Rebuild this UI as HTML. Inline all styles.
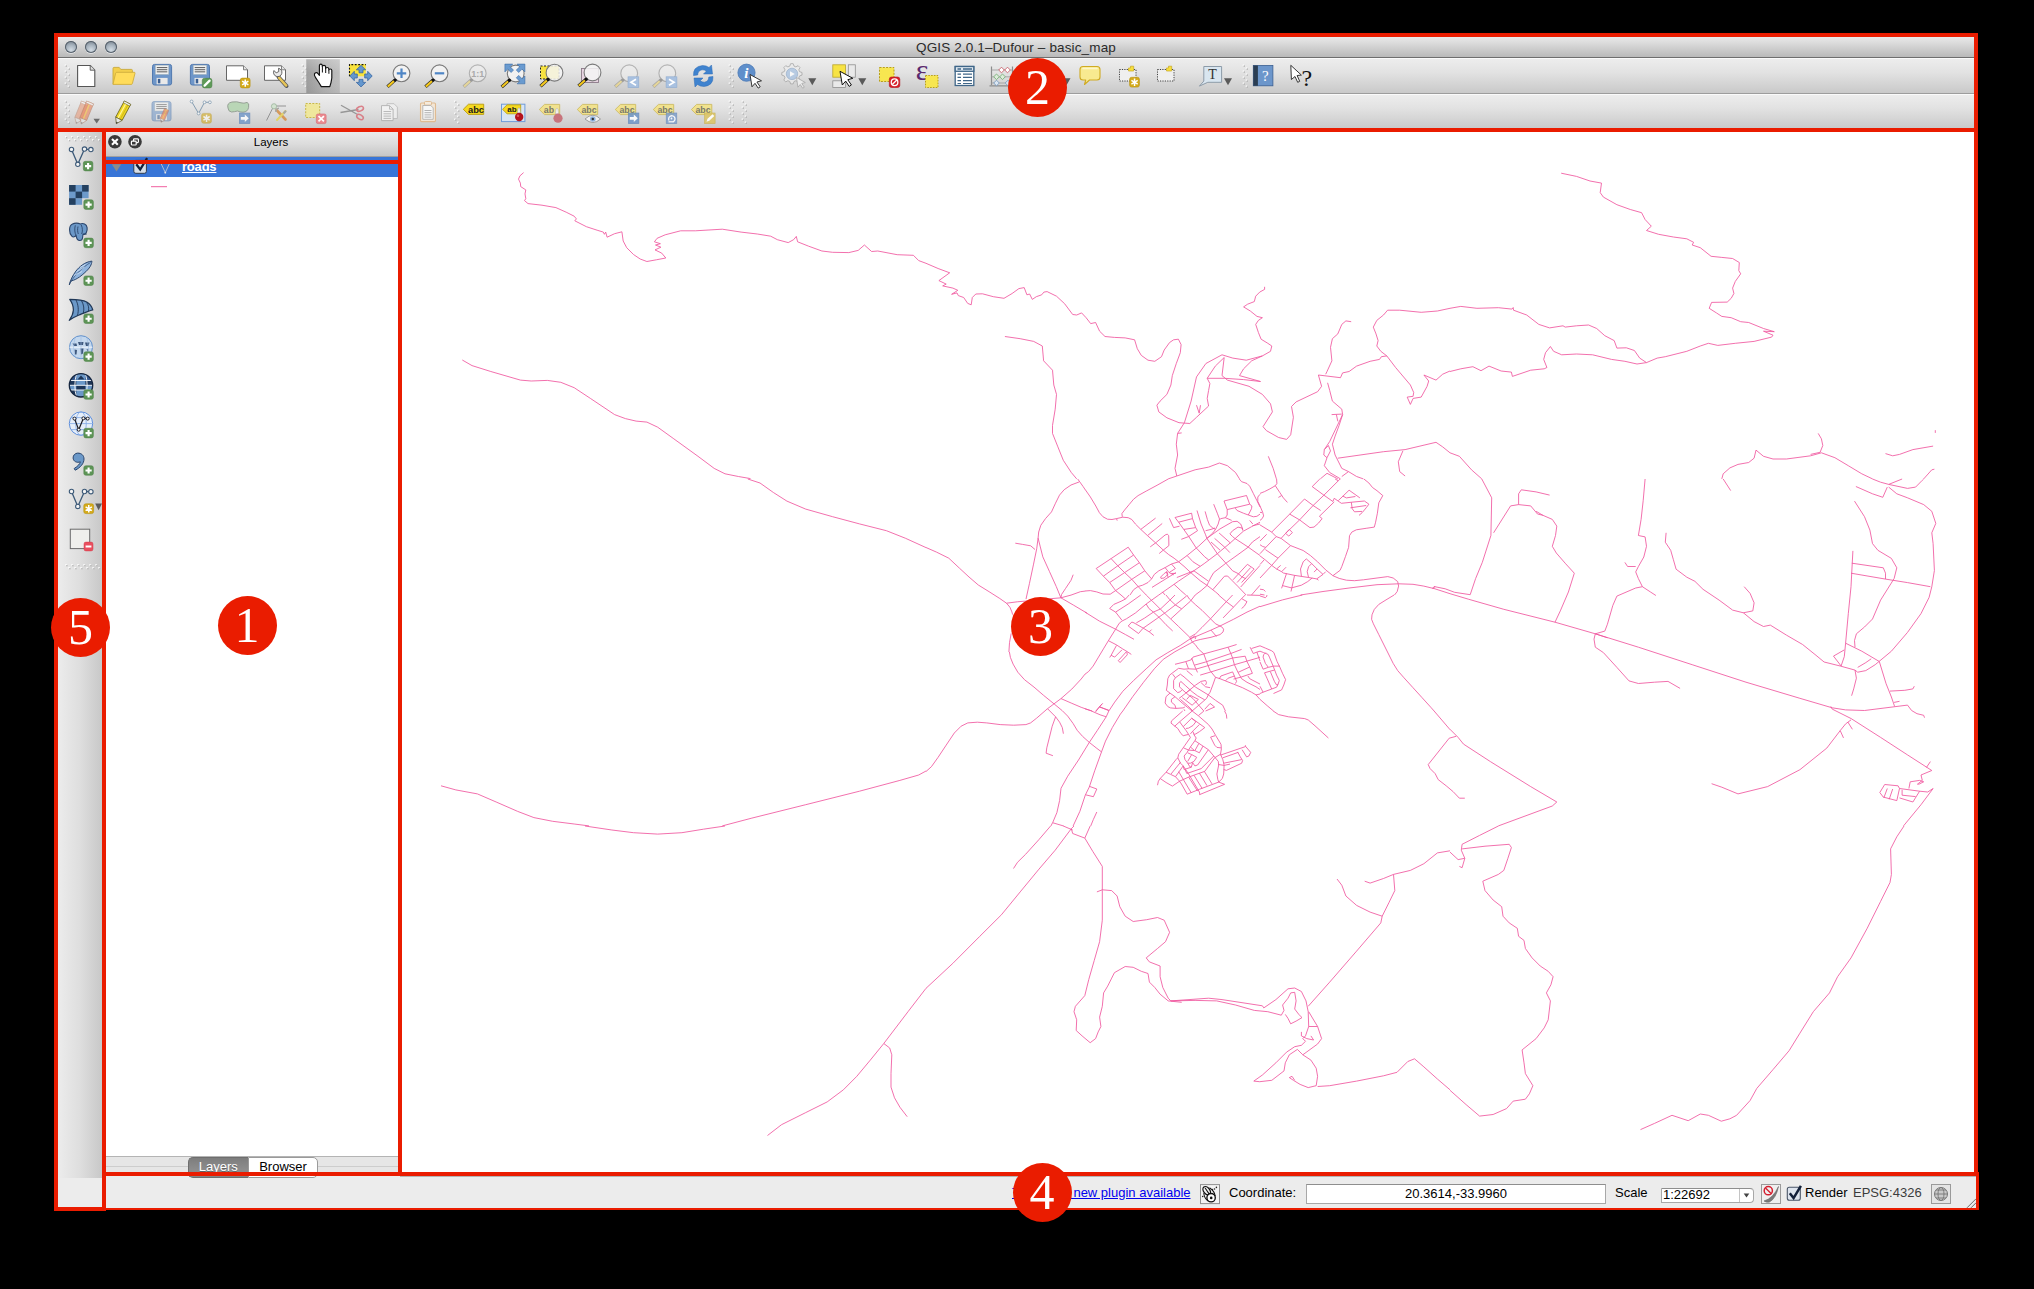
<!DOCTYPE html>
<html>
<head>
<meta charset="utf-8">
<title>QGIS 2.0.1-Dufour - basic_map</title>
<style>
html,body{margin:0;padding:0;background:#000;}
body{width:2034px;height:1289px;position:relative;overflow:hidden;font-family:"Liberation Sans",sans-serif;color:#000;}
.abs{position:absolute;}
#win{position:absolute;left:58px;top:37px;width:1916px;height:1171px;background:#ececec;}
#title{position:absolute;left:58px;top:37px;width:1916px;height:21px;background:linear-gradient(#e9e9e9 0%,#d4d4d4 45%,#b9b9b9 100%);border-bottom:1px solid #6e6e6e;box-sizing:border-box;}
#title .t{position:absolute;left:0;right:0;top:3px;text-align:center;font-size:13.5px;color:#2a2a2a;letter-spacing:0.14px;}
.tl{position:absolute;top:4px;width:12px;height:12px;border-radius:50%;background:radial-gradient(circle at 50% 75%,#d3dce4 0%,#a9b5c0 45%,#7d8995 80%);box-shadow:0 0 0 1px #56606b inset,0 1px 0 rgba(255,255,255,.5);}
#tb1{position:absolute;left:58px;top:58px;width:1916px;height:36px;background:linear-gradient(#ededed 0%,#e2e2e2 40%,#c9c9c9 100%);border-top:1px solid #fafafa;border-bottom:1px solid #9d9d9d;box-sizing:border-box;}
#tb2{position:absolute;left:58px;top:94px;width:1916px;height:34px;background:linear-gradient(#ededed 0%,#e2e2e2 40%,#cacaca 100%);border-top:1px solid #fafafa;box-sizing:border-box;}
#ltb{position:absolute;left:58px;top:132px;width:44px;height:1046px;background:linear-gradient(90deg,#ececec 0%,#dedede 50%,#c8c8c8 100%);}
#lhdr{position:absolute;left:106px;top:132px;width:292px;height:25px;background:linear-gradient(#ebebeb 0%,#dcdcdc 50%,#c6c6c6 100%);border-bottom:1px solid #a0a0a0;box-sizing:border-box;}
#lhdr .t{position:absolute;left:0;right:0;top:4px;text-align:center;font-size:11.5px;padding-left:38px;}
#llist{position:absolute;left:106px;top:157px;width:292px;height:999px;background:#fff;}
#lrow{position:absolute;left:106px;top:157px;width:292px;height:20px;background:#3875d7;}
#ltabs{position:absolute;left:106px;top:1156px;width:292px;height:21px;background:#e6e6e6;border-top:1px solid #b4b4b4;box-sizing:border-box;}
#map{position:absolute;left:402px;top:132px;width:1572px;height:1040px;background:#fff;overflow:hidden;}
#status{position:absolute;left:106px;top:1176px;width:1870px;height:32px;background:#ececec;}
.st{font-size:13px;line-height:15px;white-space:nowrap;}
.r{position:absolute;background:#ea1c00;}
.circ{position:absolute;width:59px;height:59px;border-radius:50%;background:#ea1c00;color:#fff;font-family:"Liberation Serif",serif;font-size:50px;text-align:center;line-height:59px;}
</style>
</head>
<body>
<div id="win"></div>
<div id="title">
  <div class="tl" style="left:7px"></div><div class="tl" style="left:27px"></div><div class="tl" style="left:47px"></div>
  <div class="t">QGIS 2.0.1&#8211;Dufour &#8211; basic_map</div>
</div>
<div id="tb1"></div>
<div id="tb2"></div>
<div id="ltb"></div>
<div id="lhdr"><div class="t">Layers</div></div>
<div id="llist"></div>
<div id="lrow"></div>
<div class="abs" style="left:182px;top:159px;font-size:13px;font-weight:bold;color:#fff;text-decoration:underline;letter-spacing:-0.2px;line-height:15px;">roads</div>
<div id="ltabs"></div>
<div class="abs" style="left:106px;top:1166px;width:292px;height:1px;background:#cdcdcd"></div>


<div id="map">
<!--MAPSVG--><svg class="abs" style="left:0;top:0" width="1572" height="1040" viewBox="402 132 1572 1040"><path d="M523.6 172.6L519.9 175.9L518.5 179.1L520.4 183.1L520.7 186.6L525.8 189.9L525 193.9L525.8 198.7L524.5 200.6L528 203.6L542 205.2L555.9 207.6L566.2 212.2L574.2 216.2L576.4 218.9L574.8 220.8L586.4 226.7L597.1 230.2L603.3 232.1L604.4 234.3L605.7 232.1L607.1 237.2L614.6 233.7L621.9 231.8L623.2 241L626.7 247.7L633.5 254.5L640.2 259L646.9 261.5L656.3 259.8L665.8 258L661.7 253.1L655 249.9L660.9 247.2L655.5 245L660.4 243.7L654.4 241.8L657.1 238.3L665.2 234.8L680.6 230.8L695.4 230.8L722.3 229.2L741.1 232.1L757.3 234L770.7 236.2L777.4 239.7L788.2 242.6L793.6 239.7L796.3 236.4L797.6 241.8L808.4 246.1L821.9 251L832.6 252.3L848.8 252.6L858.2 250.4L864.4 245L871.6 251.5L877.8 251L897.2 254.7L913.4 255.3L918.7 260.6L926 263.3M462.3 360L472 365.6L490.8 371.5L520.4 380.1L531.2 381L547.3 380.4L560.8 382.3L574.2 387.7L590.4 398.4L614.6 414.6L625.4 418.6L636.1 421.1L646.9 422.1L657.7 427.2L673.8 438.8L698 456.3L714.2 468.4L725 473.8L738.4 476.5L750.5 478.6M747.8 479L760 483L773.4 492.5L786.9 501.1L805.7 509.1L832.6 516.7L859.5 523.9L886.4 530.7L905.3 538.2L926 547.6M441 785.8L455.8 789.9L477.4 793.9L496.2 802L517.7 811.4L533.9 817.6L552.7 821.3L574.2 824L589 825.9M722.3 825.9L751.9 818.1L805.7 804.7L859.5 791.2L899.9 780.4L918.7 775L926 771M585 826L611.9 830L633.5 832.7L657.7 834.1L681.9 832.7L703.4 829.2L725 826M926 988.3L908 1011.7L883.8 1043.5L870.3 1060.1L856.8 1076.3L843.4 1089.8L827.2 1101.9L805.7 1112.6L781.5 1124.7L767.5 1135.5M883.8 1043.5L889.7 1048L891.8 1054.8L891 1073.6L891 1087.1L894.5 1097.8L899.9 1107.2L907.2 1116.7M926 263.3L938.1 268.5L949.7 272.8L938.9 280.6L946.2 284.1L942.7 285.9L952.9 288.1L957.8 290.3L951.6 294.3L957 292.9L958.3 295.6L963.7 297.5L967.7 303.4L971.2 304.8L972.3 297.5L975.8 294L982.5 293.8L993.3 296.7L1004 298.3L1012.1 293.5L1018.9 288.6L1024.2 287.6L1026.9 294.8L1029.6 294L1032.3 299.4L1036.3 296.7L1041.7 294.8L1043.9 292.1L1047.1 291.6L1056.5 296.2L1064.6 303.7L1072.7 314.5L1076.7 315L1081.6 312.9L1086.1 317.7L1090.7 323.6L1095.6 322.5L1099.6 331.2L1105 336.5L1114.4 337.4L1125.2 337.9L1134.6 339.8L1137.3 348.7L1141.3 355.4L1148 360.2L1154.8 361.3L1161.5 356.7L1164.2 350L1169.6 342.5L1173.6 339.8L1178.4 339.2L1181.1 344.6L1180.3 352.7L1176.3 363.5L1172.3 375.6L1170.9 385L1166.9 394.4L1160.1 401.1L1156.9 405.2L1158.8 411.9L1166.9 417.8L1179 422.7L1189.8 423.5L1196.5 417.3L1208.6 406L1207.2 398.4L1208.6 390.4L1209.9 383.6L1207.2 378.3M1177.6 433.4L1184.4 422.7L1191.1 401.1L1196.5 376.9L1205.9 363.5L1222 354.8L1232.8 358.1L1246.3 360.2L1262.4 355.9L1270.5 351.3L1271.8 346L1267.8 343.3L1261.1 339.2L1258.4 332.5L1255.7 324.4L1258.4 320.4L1262.4 317.7L1257 316.4L1250.3 311L1243.6 306.9L1247.6 304.2L1254.3 301.6L1255.7 296.2L1259.7 292.1L1264.6 289.4L1264.6 286.8M1207.2 378.3L1215.3 366.1L1224.2 357.5L1222 375.6L1227.4 380.1L1249 386.3L1262.4 394.4L1270.5 403.8L1272.4 411.9L1263 426.7L1266.5 430.7L1278.6 437.5L1286.6 439.4L1290.7 434.8L1293.4 417.3L1291.5 406.5L1296.1 401.9L1317.6 391.7L1321.6 386.3L1318.4 375L1340.5 377.7L1342.6 372.9L1349.1 371.5L1356.6 366.1L1370.1 361.3L1379.5 359.4L1381.4 356.7L1386.8 355.9L1395.6 367.5L1410.4 385L1413.7 392.5L1413.1 396.3L1407.2 397.1L1410.4 404.4L1413.1 398.4L1421.2 397.1L1427.1 386.3L1428.7 381L1423.9 375L1436 380.1L1442.7 374.2L1450 371M1207.2 378.3L1224.7 378.3L1243.6 379.6L1260.5 381.5L1239.5 375.6L1243.6 368.8L1251.7 360.8L1262.4 355.9M1199.2 413.2L1196.5 405.2M1199.2 413.2L1200.5 405.2M1004.9 336.5L1020.2 338.7L1033.7 341.4L1042.3 346L1043.6 360.8L1052.5 370.2L1053.8 385L1056.5 394.4L1055.2 409.2L1052.5 425.4L1052.5 433.4L1057.9 446.9L1063.3 460.3L1071.3 472.5L1076.7 478.9M1351.2 321.7L1345.9 320.9L1341.8 324.4L1337.8 333.9L1332.4 338.7L1330.5 347.3L1331.9 360.8L1327 371.5L1325.7 374.2M1450 308.3L1437.4 311L1421.2 312.3L1399.7 310.2L1387.6 310.2L1383.5 315L1376.8 320.4L1373.3 327.1L1376 333.9L1378.1 340.6L1376.8 346L1380.8 351.3L1386.8 355.9M1327.6 382.8L1329.7 390.4L1332.4 401.1L1341.8 409.2L1342.6 414.6L1339.1 425.4L1335.1 436.1L1332.4 444.2L1335.1 455L1341.8 468.4L1348.5 471.6M1331.6 414.6L1341.8 414.1M1336.4 414.6L1337.8 421.3M1342.6 414.6L1329.7 441.5L1324.3 449.6L1323.8 455L1327 457.7L1324.3 465.7L1329.7 472.5L1340.5 478.9M1324.3 449.6L1328.4 445.5L1330.5 450.9L1327 457.7M1337.8 458.2L1383.5 451.7L1405.1 449.6L1436 442.3L1442.7 446.9L1450 452.8M1402.9 450.9L1398.3 461.7L1399.7 471.6L1405.1 476M1181.7 432.9L1177.6 433.4L1176.3 444.2L1177.6 455L1175 468.4L1176.8 476L1168.2 478.9M1176.8 476L1195.1 469.8L1208.6 467.1L1219.4 463L1227.4 465.7L1235.5 472.5L1239.5 478.9M1268.3 456.3L1273.2 468.4L1276.4 478.9M1320.3 478.9L1327 473.3L1337.8 478.9M1341.8 476.5L1348.5 471.6L1356.6 476.5L1363.3 478.9M1182.7 711L1171.5 720.9L1171 723.1L1177.8 728.5L1180.9 733.5L1183.2 735.7L1188.6 734.4M1192.2 711L1179.6 721.8L1174.6 726.3M1179.6 721.8L1183.2 726.7L1185.9 730.3L1188.6 734.4L1190.4 737.5L1185 745.2L1178.7 754.2L1177.8 757.8L1180.5 763.2L1183.2 765.9L1188.6 774L1194 783L1199.4 792L1199.8 794.7M1203.9 711L1198.5 715.5M1192.2 711L1198.5 715.9L1208.4 724.5L1212 729L1215.6 735.3L1221 744.3L1221.4 748.8L1220.5 754.2L1222.8 759.6L1224.1 765L1223.7 774L1222.3 778.5L1218.7 782.1L1224.6 784.3L1199.4 794.7M1183.2 726.7L1191.7 718.2L1195.8 721.8L1193.1 725.4L1188.6 728.1L1185.9 728.5M1191.7 718.2L1204.8 727.6L1199.4 731.7L1195.8 733.9L1194 734.4M1199.4 724.5L1193.1 730.8L1190.4 733.9M1193.1 731.7L1194 734.8L1196.2 738L1194.9 740.7L1190.4 747L1186.8 752.8L1184.1 756L1185 759.6L1187.7 763.2L1189.9 766.8L1191.3 767.2M1194.9 740.7L1203 746.1L1208.4 749.7L1213.8 756L1218.3 761.4L1218.7 765L1216.9 774L1217.8 779.4L1218.7 782.1M1183.6 747.9L1188.6 750.1L1194.9 750.6L1199.4 752.8L1203 746.1M1190.4 747L1194 750.1M1198.9 743.4L1194.9 750.6M1187.7 752.8L1191.7 754.6L1196.7 757.3L1194 761.4L1190.4 763.2L1187.7 763.2M1191.7 754.6L1187.7 761.4M1208.4 749.7L1197.6 765L1194.9 765.9L1192.6 762.7L1191.3 767.2L1184.1 769.5L1183.2 765.9M1213.8 756L1201.2 768.6L1186.8 773.5L1185 769.5M1220.5 754.2L1214.7 757.8L1204.8 771.3L1188.6 777.1L1179.6 781.2L1172.4 786.1L1166.1 782.5L1160.2 778.5L1158.4 781.2L1157.5 785.2M1160.2 778.5L1166.1 772.2L1176 759.6L1177.8 757.8M1166.1 772.2L1170.6 774.4L1175.5 776.7L1178.7 780.3L1181.4 783.9L1187.2 794.2L1199.4 789.3L1218.7 782.1M1171 774L1180.5 762.3M1175.5 776.7L1183.2 765.9M1178.7 771.7L1191.3 792.9M1194 775.3L1202.1 788.4M1199.4 773.1L1207 785.7M1204.3 771.3L1212 783.9M1188.6 777.1L1197.6 791.1M1210.6 737.1L1215.1 735.7M1210.6 737.1L1214.7 745.2L1216.9 747.4L1221 747.9M1220.5 755.1L1245.7 746.5L1250.7 752.4L1248.9 756L1246.6 756.9L1242.1 749.7M1245.7 746.5L1245.3 745.2M1237.6 751.9L1240.3 756.9L1242.6 760.5L1241.7 763.2L1226.4 770.4L1223.7 769.5M1222.8 757.8L1238.1 752.4M1223.7 763.2L1241.7 759.6M1218.3 764.5L1224.1 765.4L1230 764.1M1224.6 711L1226.4 714.6L1226.8 718.6M1273.2 711L1278.6 714.6L1288.5 716.8L1304.7 718.6L1308.3 720L1315 725.8L1328.4 738M1085 489.3L1090.4 497L1095.8 506L1099.4 512.7L1103 516.8L1107.5 519.2L1112 519.5L1116.5 518.6L1122.8 517.2L1128.2 517.7L1131.8 519.5L1135.4 524L1140.8 529.4L1148 536.1L1155.6 542.9L1163.3 550.1L1168.7 554.6L1174.1 558.2L1178.6 561.8L1184 566.3L1191.2 573L1200.2 580.7L1207.4 585.6L1215.5 591.9L1219.1 595M1116.5 518.6L1117.2 520.6M1168.2 479L1157 485.3L1146.2 491.1L1138.1 495.6L1133.6 499.2L1129.1 504.6L1124.6 510L1121.9 513.6L1122.3 516.8M1140.8 529.4L1155.6 518.1M1148 535.2L1162.2 523.5M1150.2 546.9L1155.6 542.9L1165.1 535L1167.3 534.1L1168.7 535.7L1168.9 545.6L1163.3 550.1L1159.2 553.5M1169.4 518.3L1173.6 527.6L1179.5 526.2M1175 517.5L1191.6 513.2L1192.5 518.6L1195.7 527.6L1197.5 530.7M1175 517.5L1178.6 522.2L1188.5 536.1L1196.1 547.8L1204.7 556.8L1208.7 560M1178.6 522.2L1192.5 518.6M1184 529.4L1195.7 527.6M1181.3 539.3L1188.5 536.6L1197.5 530.7M1096.2 568.5L1111.1 558.6L1128.2 547.2M1103.4 576.2L1117.8 565.8L1133.6 555M1109.7 582.5L1124.6 572.6L1139.4 562.7M1110.2 594.2L1115.6 590.6L1131.8 579.3L1144.8 570.8M1096.2 568.5L1103.4 576.2L1109.7 582.5L1115.6 590.6L1121 595M1111.1 558.6L1117.8 565.8L1124.6 572.6L1131.8 579.3L1138.1 586.5L1146.2 595M1128.2 547.2L1133.6 555L1139.4 562.7L1144.8 570.8L1151.6 578.9M1151.6 578.9L1148 582.5L1142.6 585.2L1138.1 586.5L1133.6 589.7L1130 595M1151.6 578.9L1154.3 574.4L1158.8 570.8L1165.1 567.6L1171.4 564L1178.6 561.8M1085 591L1090.4 590.6L1096.7 591.9L1103 594L1110.2 594.2M1165.1 567.6L1169.1 572.6L1175.4 568.5L1171.4 564M1169.1 572.6L1173.6 574.8M1171.4 573.5L1175.9 573.3M1160.6 577.1L1164.2 573.5L1166.9 571.7L1167.8 574.4L1164.2 578L1161 578.4L1160.6 577.1M1166.4 571.7L1168.2 577.5M1152 587.4L1175.9 572.6M1158.8 595L1178.6 581.1L1191.2 572.6L1204.2 563.6L1217.3 553.7L1230.3 542.9L1243.4 531.2L1251.5 526.7L1260 522.2M1178.6 561.8L1187.1 555.5L1198.8 546L1206.9 538.4L1220 528.9L1232.6 521.7L1237.1 521.3L1240.7 524L1242.9 529.4M1176.8 577.5L1193.9 570.8M1195.2 595L1201.1 590.6L1206.9 585.6L1208.3 582.5L1211 577.1L1213.7 572.6L1225.4 563.6L1238 554.6L1247.9 547.4L1252.4 542L1260 536.6M1212.8 589.7L1224.5 576.2L1227.6 576L1238 586.5L1246.1 595M1233 579.8L1247.4 564.3L1254.2 569L1241.6 582.5M1237.1 582.5L1250.6 567.6M1240.7 587L1260 565.4M1251.5 595L1260 585.2M1187.1 555.5L1193 561.8L1200.2 566.3M1197 510.5L1201.1 524L1205.6 534.8L1206.9 538.4M1205.1 511.4L1207.4 519.5L1209.6 525.3L1212.8 528L1215.5 529.4M1213.7 504.2L1217.3 513.2L1219.5 519L1218.2 524L1215.5 529.4L1212.8 533L1206.9 538.4M1205.6 530.7L1211 529.4L1215 528M1206.9 538.4L1217.3 553.7M1214.6 538.4L1224.9 547.4L1229.9 552.6M1219.1 533L1230.3 542.9M1211 542L1220 550.1M1217.3 553.7L1225.8 563.1L1232.6 570.8L1238 573.5L1241.6 576.6L1246.1 578.9M1234.8 538.4L1247.9 546.9L1260 555.5M1193.9 570.8L1202 576.6L1208.3 581.1M1174.1 584.3L1180.8 590.6L1185.8 595M1162.4 591.9L1165.1 595M1224 501L1246.5 495.5L1249.7 504.2L1227.2 509.6L1224 501M1249.7 504.2L1251.9 506L1251.5 508.7L1248.3 515M1235.3 508.2L1237.1 510.5L1243.4 513.2L1248.3 515L1253.3 516.8L1256.9 516.3L1260 514.1M1227.2 509.6L1227.2 515L1225.4 517.7L1220.9 518.6L1219.5 519.9M1225.4 517.7L1231.7 520.4M1239.3 479L1241.6 481.7L1247 483.5L1249.7 486.2L1253.3 493.4L1256.9 500.6L1260 506.9M1260 494.3L1257.8 497L1257.8 501.5L1260 506M1249.7 520.4L1252.8 524M1252.4 525.8L1260 524M1242.9 530.7L1242 528L1238 527.1L1232.6 530.7L1229.9 533.9L1232.6 536.6L1234.8 538.4M1276.6 479L1276.9 483.5L1275.3 485.7L1269.9 488.9L1264.5 491.6L1260 493.4M1275.3 485.7L1279.8 492.5L1283.4 497.9L1287.4 502.4M1278.4 497.4L1281.6 495.6M1260 506L1262.7 512.3L1263.6 515.9L1262.2 518.6L1260 520.4M1260 512.3L1262.2 512.7M1260 524.9L1271.7 532.1L1276.2 536.6L1281.1 538.4L1290.6 545.6L1303.2 550.5L1310.4 555.5L1317.6 561.8L1325.7 569.9L1332.9 575.7L1339.2 578.4L1346.4 580.2L1354.5 580.7L1363.5 579.8L1377 578L1387.8 576.6L1393.2 578L1397.7 581.6L1398.6 586.1L1397.2 591.5L1394.5 595M1260 578L1271.7 565.4L1278 558.2L1290.6 545.6M1260 553.7L1265.8 547.4L1276.2 536.6M1281.1 538.4L1285.6 533.4L1299.6 519.9L1313.1 505.5L1323.9 495.2L1338.3 480.8L1340.1 479M1285.6 533.4L1289.2 529.4L1292.4 532.5L1288.8 536.1L1285.6 533.4M1271.7 532.1L1289.7 514.1L1304.5 499L1313.1 505.5L1320.7 510.5M1289.7 514.1L1299.6 519.9L1309.9 527.6L1314 527.1L1318.5 523.1L1322.1 518.6L1319.4 516.3L1334.2 501.9M1319.8 479L1312.2 486.6L1323.9 495.2L1332.9 501.5L1334.2 498.3L1341.4 503.3L1351.8 502.2L1364.4 501L1368.9 504.2L1366.2 507.8L1362.1 512.7L1359 515.4M1338.3 500.6L1349.1 490.2L1359.9 497.9M1342.8 496.1L1346.4 497.9L1355.4 496.5M1351.3 502.2L1352.2 508.7L1354.5 511.8L1362.1 511.4M1350.4 507.8L1366.2 505.5M1335.1 479L1338.3 480.8M1260 541.1L1266.7 534.3M1260 564.5L1264 560M1260 544.7L1262.7 546.5L1265.8 547.4M1265.4 549.6L1278 558.2M1260 555.9L1265.4 560L1271.7 565.4L1276.6 569L1281.6 571.7L1283.4 573L1294.2 575.3L1308.6 577.5L1316.7 578.9L1318.5 580.2M1276.6 569L1280.7 565.4M1281.6 571.7L1286.1 567.2M1286.5 573.5L1281.6 588.3M1294.6 575.3L1291 591.5M1282.5 585.6L1291.5 587.9L1301.4 585.2L1307.7 581.6L1312.2 578M1301.4 576.2L1300.5 569L1303.2 561.8L1306.3 558.9L1311.7 563.6L1317.1 569L1323 574.4M1308.6 577.5L1307.2 571.7L1308.6 566.7L1311.7 563.6M1316.7 578.9L1323 574.4L1325.7 571.7M1314 572.1L1317.1 569M1363.9 479L1368.9 483L1372.5 487.5L1377 490.7L1382.8 495.6L1378.8 502.8L1377.4 513.2L1375.6 522.2L1374.3 527.1L1366.2 528.3L1356.3 529.8L1351.8 532.1L1349.5 535.7L1348.6 547.4L1345.5 556.4L1341.9 566.3L1340.1 570.3L1332.9 575.7M1300.5 595L1323 591.5L1350 587.9L1377 584.7L1398.6 583.8L1413 584.3L1423.8 586.1L1435 588.8M1432.3 588.3L1435 586.1M1260 589.2L1263.6 589.7L1265.4 591.5M1260 594.2L1264.5 595M1085 612.1L1099.4 621.1L1115.6 629.2L1125.5 634.6L1134 639.3M1085 674.2L1088.6 671.5L1093.1 666.1L1098.5 657.1L1103.9 648.1L1108.8 640L1115.6 629.2L1119.2 623.3L1121.9 621.1L1126.4 618.8L1135.4 613L1146.2 604L1158.8 595M1115.6 612.1L1128.2 604L1140.8 595M1121.9 620.2L1115.6 612.1L1109.7 608.5L1113.8 604.4L1121 601.3L1125.5 599L1129.1 595M1121 595L1125.5 599M1136.3 622.9L1144.4 618.2L1153.4 612.1L1160.6 608.9L1169.6 600.4L1175 595M1128.2 626L1131.8 622L1134 622.9L1143.5 628.3L1149.3 631.9L1153.8 635.5M1149.3 631.9L1151.6 629.6M1128.2 626L1138.5 633.5L1143 628.3L1157.9 617.9L1165.5 612.5L1175.4 604.9L1186.7 595.9M1146.2 595L1151.6 600.4L1160.6 609.4L1170.5 618.8L1178.6 626.5L1189.8 637.3L1192.1 641.8L1195.2 644.5L1198.4 649L1203.8 653.9L1206.5 661.6L1210.1 670.6L1213.7 675.1L1215.5 677.3M1146.2 604L1148.9 608.5L1153.4 612.1L1159.7 617.9L1166 624.7L1172.7 631M1166 595L1169.6 599.5L1175.4 604.9L1181.7 608.9M1186.7 595L1189.4 599L1195.7 604.9L1202 610.3L1210.5 618.8L1215.5 623.8L1220 626M1218.6 595L1226.3 601.7L1233.5 607.1M1170.9 618.8L1181.7 608.9L1190.3 601.3L1195.2 595M1189.8 637.3L1195.7 633.7L1202 627.4L1210.5 618.8L1220 608.5L1226.3 601.7L1232.6 595M1223.1 617.9L1233.5 607.1L1241.6 598.6L1245.2 595M1241.6 598.6L1247 601.7L1244.3 606.2L1241.6 608.5M1247 595L1260 595.4M1108.8 711L1114.7 702.1L1122.8 691.3L1133.6 680.5L1146.2 668.8L1156.1 659.8L1167.8 652.6L1180.4 645.4L1189.8 639.1L1194.8 635.9L1195.7 637.3L1195.2 639.1M1122.8 711L1132.7 696.7L1143.5 682.3L1154.3 668.8L1163.3 659.3L1175 651.7L1189.8 643.6L1194.8 640.9L1200.2 639.5L1211 637.3L1220 634.6L1223.1 631.9L1223.6 629.2L1221.8 626.9L1220 626M1189.8 639.1L1211 630.1L1220 626L1233.5 619.3L1247 612.1L1260 606.2M1211 630.1L1216.4 636.4M1108.8 640.9L1116.5 644.9L1122.8 649L1127.3 651.7L1131.3 654.4M1116.5 645.4L1111.1 655.3L1109.7 657.5M1111.1 655.3L1114.7 657.1L1121.9 649.9M1126.4 651.7L1118.3 660.7L1120.1 662.5L1127.3 654.8L1126.8 651.7M1085 708.8L1092.2 711M1095.8 711L1099.4 707L1102.1 703.9M1099.4 707L1108.8 710.2M1175 664.3L1185.8 661.6L1191.2 659.8L1193 657.1L1203.8 653.9L1228.1 647.2L1236.6 644.5M1191.6 658L1194.3 665.2L1197.5 672.4M1194.3 665.2L1205.6 662L1230.8 653.5L1241.6 649.4M1185.8 661.6L1188.5 668.8M1178.6 668.3L1184 669.2L1188.5 668.8L1195.7 669.2L1206.5 666.1L1232.6 658L1245.2 656.2L1247 661.6L1249.7 667L1252.4 673.3L1241.6 676.9L1233.5 679.1M1186.7 670.6L1192.5 675.5M1200.2 675.1L1211 671.9L1234.4 664.7L1257.8 658L1260 657.1M1228.1 647.2L1230.8 653.5L1232.6 658L1234.4 664.7L1238 672.4L1241.6 678.7L1247 682.3L1256 686.8L1260 689.5M1250.1 647.2L1253.3 653.5L1256.9 652.1L1260 651.2M1251.5 648.5L1260 645.8M1256.9 652.1L1260 661.1M1238 672.4L1249.7 667M1215.5 677.3L1220 678.7L1225.4 680.9L1233.5 684.1L1242.5 687.7L1251.5 692.2L1256 694.9L1260 699.4M1219.1 679.1L1220.9 676L1232.6 671.9L1234.4 676L1236.6 681.4L1235.3 683.6M1225.4 680.9L1228.1 678.2L1234.4 676M1247.9 676L1249.7 678.7L1260 684.1M1256 694.9L1260 694M1215.5 677.3L1212.8 685L1210.1 692.2L1208.3 694.9L1206.5 698.5L1199.3 704.8L1192.1 711M1178.6 668.3L1175 671L1169.6 675.1L1167.8 678.7L1167.3 685L1166.4 690.4L1170 693.1L1175 696.7L1182.2 703L1192.1 711M1172.7 674.2L1175.4 677.8L1180.4 674.2L1184 676.9L1195.7 687.2L1208.3 694.9L1215.5 700.3L1222.7 705.2L1225.4 711M1175.4 677.8L1173.6 680.5L1173.6 688.6L1177.7 692.6L1180.4 691.7L1182.2 689.5L1179.5 686.8L1179.5 683.2L1180.8 681.4L1185.8 685.9L1192.1 691.7L1197.5 695.8L1204.7 699.8M1185.8 693.1L1195.7 685L1201.1 681.4L1205.6 680.5L1206.5 682.7L1205.6 685M1201.1 682.7L1205.6 686.8L1210.1 687.7M1182.2 689.5L1186.7 693.5L1193 698.5L1198.4 704.8L1203.8 711M1179 698.5L1185.8 693.1L1190.3 689.5M1182.2 697.6L1192.1 705.2L1198.4 699.4L1190.3 695.3L1186.7 699.4M1180.4 699.4L1187.6 705.7L1193 711M1170 693.1L1166 696.7L1165.1 703L1167.8 706.6L1170.5 707.9L1175.9 708.4L1183.1 707.9L1184.9 707M1175 696.7L1171.4 699.4L1171.4 702.1L1175 705.2L1175.9 708.4M1204.7 709.3L1210.1 703.4L1214.6 707L1205.6 711M1184 709.3L1184.9 711M1260 606.7L1282.5 599.9L1302.3 595M1260 595.9L1265.4 597.7L1267.2 595.9L1266.3 595M1394.1 595L1386 599.9L1378.8 604.4L1374.3 609.4L1372 614.8L1371.6 619.3L1373.4 623.8L1378.8 634.6L1386 649L1393.2 663.4L1397.7 670.6L1404 677.8L1413 687.7L1422 697.6L1431 707.5L1434.1 711L1450 729.6M1260 645.8L1265.4 648.1L1271.7 650.8L1273.9 652.6L1277.1 661.6L1279.8 667L1282.5 673.3L1285.6 679.6L1283.8 685L1281.6 689.9L1273.5 693.5M1260 651.2L1263.6 652.6L1268.1 654.4L1269.4 657.1L1273.5 667L1276.6 675.1L1279.3 680.5L1278 684.5L1276.6 687.2L1271.7 689L1263.1 692.2L1260 693.5M1265.8 652.6L1263.6 654.8L1263.1 657.1L1265.4 663.4L1268.1 667M1263.1 669.2L1268.1 667.4L1273.5 666.1L1279.8 666.1M1260 662L1263.1 669.2M1264.5 672.8L1270.8 671L1274.4 670.1M1264.5 672.8L1267.2 678.7L1271.7 689M1270.3 671.5L1274.4 681.4L1276.6 685L1278 684.5M1260 686.3L1263.1 692.2M1260 699.4L1267.2 705.7L1273.5 711M926 547.5L936.7 552.2L948.8 558.2L959.6 568.3L969 577L978.3 585L989.1 591.7L999.8 598.5L1006.5 603.2L1009.9 607.2L1011.9 611.9L1012.6 614.6M1011.2 633.4L1009.5 642.7L1008.9 652M1006.5 603.2L1017.3 601.8L1025.3 601.1L1033.4 600.2L1060.9 597.8L1071 595.1L1080.4 591.7L1085.1 591.1M1077.7 479L1083 486.4L1085.1 489.5M1079 482L1071 485L1064.2 489.7L1059.5 495.1L1055.5 503.2L1051.5 511.9L1045.5 518.6L1040.8 525.3L1038.7 532L1038.1 538.1L1036.7 548.8L1033.4 564.9L1029.4 583.7L1026 599.1M1038.1 538.1L1040.1 546.1L1042.8 556.8L1049.5 571.6L1056.2 586.4L1060.9 597.8L1073.6 605.2L1087.1 613.2M1015.3 543.2L1022.6 544.4L1030.7 545.8L1035 549.5M1073.2 574.7L1071 580.3L1065.6 588.4L1061.6 594.4L1060.9 597.8M1009.4 652L1010.4 657.4L1013.1 664.1L1017.8 672.2L1024.5 679.7L1034 687.1L1043.4 695.2L1054.2 704L1062.3 710.7L1067.7 716.1L1073.1 723.5L1077.2 730.3L1082.6 736.4L1089.3 742.4L1096.1 747.8L1101.5 751.9M1085 674.1L1081.2 679L1071.8 689.1L1061 698.6L1047.5 708.7L1036.7 718.1L1030.6 722.9L1025.9 724.6L1013.7 725.2L1000.2 724.6L986.7 722.9L977.3 722.2L967.8 722.9L961.1 726.2L954.3 733L946.2 745.1L938.1 757.3L931.4 766.7L926 771.5M1061 698.6L1071.8 703.3L1081.2 707.3L1090.7 710.7L1100.1 714.8L1106.2 716.8M1095.4 712.1L1099.5 706.7L1102.8 703.3M1099.5 706.7L1108.9 710.7M1047.5 708.7L1055.6 716.8L1059.6 722.2L1062.3 727.6L1063.4 733.7M1055.6 716.8L1052.2 726.2L1049.5 737L1046.8 747.8L1046.1 753.2L1052.9 755.7M1108.8 711L1106.2 716.8L1097.4 730.3L1089.3 742.4L1078.5 760L1067.7 776.2L1061 788.3L1059.6 800.5L1056.9 812.6L1052.9 822.1L1050.9 826M1122.8 711L1120.4 714.1L1112.3 727.6L1105.5 741.1L1101.5 751.9L1094.7 770.8L1089.3 787L1085.3 795.1L1079.9 811.3L1073.1 826M1052.9 822.8L1063.7 826M1089.3 786.3L1096.8 789L1093.4 796.7L1085.6 794.8M1096.8 812L1093.4 819.4L1090.7 826M1050.6 826L1039 839.5L1025.6 854.3L1017.5 862.3L1013.5 868.5M1074 826L1071.3 828.7L1055.2 850.2L1039 869.1L1020.2 891.9L1001.4 914.8L979.8 936.3L952.9 963.3L926 988.3M1063.3 826L1072.7 830M1090.2 826L1084.8 838.1L1072.7 833.5L1071.3 828.7M1084.8 838.1L1092.9 851.6L1102.3 866.4L1102.3 890.6L1102.3 920.2L1099.6 941.7L1094.2 960.6L1088.8 979.4L1084.8 995.6L1075.4 1006.3L1074 1011.7L1076.7 1019.8L1076.2 1030.5L1082.1 1035.9L1090.2 1042.7L1095.6 1038.6L1098.2 1031.9L1100.9 1026.5L1099.6 1017.1L1102.3 1006.3L1103.6 992.9L1107.7 986.1L1111.7 978.1L1114.4 972.7L1125.2 966.5L1133.2 967.3L1141.3 971.3L1148 973.5L1149.4 982.1L1154.8 987.5L1160.1 994.2L1168.2 1000.9L1181.7 1002.3M1096.9 891.9L1102.3 889.8L1111.7 890.6L1117.1 896L1119.8 906.7L1125.2 916.2L1133.2 921.5L1146.7 919.7L1157.5 917.5L1164.2 920.2L1169.6 932.3L1165.5 941.7L1157.5 948.5L1146.2 957.9L1149.4 961.9L1160.1 966L1160.1 976.7L1162.8 987.5L1168.2 998.2L1170.9 1000.9L1208.6 998.2L1222 999.6L1262.4 1005.8L1263.8 1007.9L1275.9 999.6L1288 988.8L1294.7 988L1301.4 991.5L1306 1000.9L1308.2 1011.7L1308.7 1026.5L1305.5 1035.9L1302.8 1038.6M1170.9 1000.9L1195.1 1000.4L1216.7 1000.9L1235.5 1005L1254.3 1010.4L1267.8 1011.7L1281.3 1015.2M1281.3 1015.2L1284 1010.4L1282.6 1005L1288 998.2L1290.7 992.9L1294.7 992.3L1296.1 1000.9L1294.7 1009L1298.8 1014.4L1302 1017.6L1296.1 1021.1L1290.7 1023.8L1288 1018.4L1285.3 1014.4M1308.2 1006.3L1329.7 982.1L1356.6 951.1L1380.8 922.9L1382.2 916.2L1388.9 902.7L1394.8 890.6L1393.5 874.4L1410.4 870.4L1423.9 863.7L1437.4 852.9L1450 850.8M1393.5 874.4L1383.5 878.5L1370.1 883.1L1364.7 881.2M1337 879L1341.8 885.2L1345.9 896L1356.6 905.4L1370.1 912.1L1382.2 916.2M1308.7 1026.5L1317.6 1026.5L1321.6 1038.6L1317.6 1044L1302.8 1054.8L1310.9 1060.1L1316.2 1068.2L1317.6 1076.3L1316.2 1085.7L1308.2 1087.6L1300.1 1084.4L1293.4 1080.3L1289.3 1077.6L1292 1076.3L1294.7 1080.3M1308.7 1011.7L1317.6 1026.5M1317.6 1086.5L1329.7 1085.7L1356.6 1081.1L1383.5 1075.8L1397 1072.3L1407.8 1061.5L1414.5 1058.8L1423.9 1066.9L1437.4 1079L1450 1089.8M1302.8 1038.6L1305.5 1041.3L1301.4 1045.3L1294.7 1046.7L1286.6 1052.1L1275.9 1062.8L1262.4 1075L1253.8 1081.1L1259.7 1081.7L1271.8 1080.3L1284 1070.9L1285.3 1062.8L1289.3 1054.8L1297.4 1049.4L1302.8 1054.8M1301.4 1031.9L1301.4 1035.9L1306.8 1038.6L1313.6 1040L1310.9 1035.9M1561.2 173.2L1576.5 176.4L1590 181L1601.5 183.1L1600.2 192.6L1603.4 197.1L1616.9 204.7L1630.3 209.5L1641.6 212.7L1645.1 219.5L1651.3 226.2L1646.5 230.5L1658.6 234.3L1673.4 237L1686.8 238.8L1693.6 242.3L1692.2 245L1700.3 247.7L1711.1 256.3L1721.8 257.4L1732.6 258.5L1739.3 262.5L1738.8 270.6L1740.7 273.8L1735.3 281.4L1732.6 288.1L1733.9 293.5L1731.2 298.3L1727.2 302.1L1711.6 302.4L1709.2 308.3L1716.4 312.9L1721.8 316.4L1731.2 317.7L1740.7 321.7L1748.7 322.5L1763.5 328.5L1774.3 331.7L1763.5 331.2L1773 335.2L1771.6 337.1L1754.1 341.4L1735.3 343.3L1717.8 345.4L1708.4 343.3L1700.3 346L1686.8 351.3L1665.3 356.7L1657.2 358.1L1646.5 362.6L1637 364L1624.9 361.3L1611.5 359.4L1592.6 354.8L1576.5 354L1561.7 354.8L1553.6 351.3L1550.4 346.5L1545.5 352.7L1543.7 359.4L1546.9 367.5L1544.2 368.8L1530.7 370.2L1512.4 376.4L1511.4 372.1L1501.1 371L1489 366.1L1481 370.7L1472.9 366.7L1460.8 368.8L1450 371.5M1450 308.3L1460.8 306.4L1476.9 308.3L1498.4 307.7L1511.9 309.1L1513.2 307.5L1513.5 310.2L1526.7 315L1538.8 324.4L1549.6 327.9L1563 325.8L1565.2 327.1L1576.5 325.8L1588.6 325L1596.7 328.5L1604.8 335.7L1614.2 340.6L1616.9 348.1L1626.3 347.8L1634.4 350.5L1639.7 358.1L1646.5 362.6M1450 452.8L1459.4 456.3L1471.5 469.8L1481.8 478.9M1721.8 478.9L1723.2 473.8L1729.9 467.9L1738 464.4L1748.7 462.5L1754.1 458.2L1756 450.1L1763.5 456.3L1773 459L1786.4 459L1810.6 455.8L1821.4 452.8L1834.9 457.7L1848.3 465.7L1861.8 473.8L1872.5 478.9M1818.2 433.4L1821.4 438.8L1822.8 445.5L1820.1 452.3L1810.6 454.4M1885.5 453.6L1892.7 455.8L1899.5 454.4L1912.9 449.6L1933.1 446.1M1935.3 430.2L1935.3 432.9M1923.7 478.9L1931.8 469.8L1934.4 469.2M1434.9 588.8L1450 593.7L1468.8 599.3L1503.8 609.3L1555 622.2L1595.3 633.8L1638.4 647.2L1692.2 664.7L1746 682.2L1799.9 698.3L1832.2 707.8L1845.6 709.9L1864.5 710.5L1886 707.8L1907.5 705.1L1911.6 710.5L1917 713.7L1923.7 715.3L1924.5 717.7M1481.8 479L1491.7 497.8L1490.9 535.5L1482.3 562.4L1475.6 578.6L1470.2 594.7M1493.6 532.8L1510.6 505.9L1518.6 504.6L1530.7 505.9L1537.5 514L1542.9 515.3L1552.3 519.4L1556.8 526.1L1555.5 535.5L1552.3 546.3L1556.3 553L1565.7 563.8L1574.3 573.2L1568.4 592L1560.3 610.9L1555 622.2M1518.6 504.6L1518.6 493.8L1521.3 489.8L1536.1 491.9L1549.6 495.1M1536.1 511.3L1542.9 515.3M1645.1 479L1643.2 500.5L1641.1 519.4L1638.4 535.5L1645.1 536.9L1646.5 546.3L1643.8 557L1638.4 566.5L1635.7 571.9L1638.4 578.6L1642.4 586.7L1635.7 588L1616.9 596.1L1612.8 605.5L1607.4 624.3L1604.8 631.1L1595.3 633.8L1594 639.1L1595.3 647.2L1603.4 652.6L1616.9 667.4L1629 680.9L1638.4 683.5L1654.5 682.2L1668 681.4L1680.1 688.4M1624.9 562.4L1627.6 566.5L1635.7 566.5M1642.4 586.7L1650.5 592L1655.9 595.5M1595.3 633.8L1607.4 637.8M1666.1 532.8L1665.3 542.2L1670.7 550.3L1673.4 559.7L1676.1 569.2L1686.8 577.2L1694.9 581.3L1703 589.3L1719.1 600.1L1732.6 610.1L1743.4 612.8L1752.8 610.9L1754.1 602.8L1750.1 593.4L1744.2 586.7M1743.4 612.8L1754.1 621.6L1763.5 626.5L1770.3 625.1L1786.4 635.1L1802.6 644.5L1816 655.3L1824.1 662L1840.2 666L1855 670.1L1856.4 678.2L1853.7 688.9L1851.6 695.7M1723.2 479L1730.7 490.6M1852.9 550.9L1851 586.7L1848.3 613.6L1845.6 643.2L1844.3 656.6L1841.1 666L1833.5 656.1L1844.3 649.9M1851.8 563.2L1883.3 567.8L1885.5 573.2L1885.5 579.1M1851 573.2L1885.5 579.1L1907.5 582.6L1930.4 586.7M1845.6 643.2L1861.8 651.2L1879.3 661.5L1886 683.5L1891.4 697L1894.6 706.4M1890 691.1L1904.8 690.3L1912.9 688.9L1914.3 686.2M1894.1 702.4L1899.5 701.3M1855 670.1L1857.7 672.2L1865.8 670.6L1875.2 664.7L1891.4 651.2L1907.5 632.4L1921 613.6L1929.1 597.4L1931.8 586.7L1934.4 570.5L1933.1 543.6L1931.8 532.8L1935.8 523.4L1931.8 511.3L1923.7 504.6L1907.5 497.8L1896.8 493.8L1888.7 487.1M1857.7 667.4L1865.8 662.6L1871.2 658.8M1854.5 501.1L1864.5 516.7L1869.9 530.1L1872.5 543.6L1877.9 550.3L1891.4 558.4L1896.8 567.8L1894.1 578.6L1880.6 600.1L1872.5 619L1864.5 627L1856.4 633.8L1854.5 640.5L1855 647.2M1872.5 479L1880.6 482.2L1888.7 484.4L1902.1 479M1888.7 484.4L1907.5 488.4L1915.6 487.1L1922.3 480.3L1923.7 479M1855.9 486.5L1872.5 493.8L1882.8 497.3L1887.3 487.1M1830.8 706.4L1832.2 709.1L1851 718.5L1880.6 737.4L1907.5 754.9L1931.8 770.5L1921 775L1922.3 780.4L1917 784.5M1926.4 767.5L1930.4 761.6M1851 719.9L1845.6 723.9L1840.2 730.6L1826.8 748.1L1799.9 769.7L1767.6 786.6L1738 793.9L1721.8 787.2L1711.6 783.7M1840.2 730.6L1843.5 737.9M1847.8 722L1852.4 729.3M1879.8 792.5L1884.7 784.5L1898.1 785.8L1899.5 788.5L1919.6 791.2L1927.7 792L1933.1 788.5M1879.8 792.5L1883.3 797.1L1896.8 800.6L1899.5 788.5M1887.3 788.5L1883.8 797.9M1892.7 789L1889.2 799.3M1902.1 789.9L1902.1 795.2L1915.6 796.6M1899.5 797.9L1912.9 802L1919.6 791.2M1908.9 788.5L1910.2 781.8L1919.6 780.4L1923.7 781.8L1918.3 784.5M1933.1 788.5L1921 804.7L1903.5 825.9M1450 729.3L1458.1 737.4L1463.5 744.1L1490.4 761.6L1530.7 786.6L1556.8 802L1552.3 806L1498.4 825.9M1470.2 594.7L1454.6 592.3L1445.2 588.8L1434.9 586.7L1433 588.8M1456.2 736.3L1449.2 738.2L1428.2 764.6L1430.1 768.6L1435.2 773.7L1438.2 779.6L1446.2 785.8L1453.2 791.7L1459.4 798.2L1464.8 798.2M1498.4 826L1479.6 835.4L1462.1 844.3L1461.3 850.2L1464.8 858.3L1462.1 867.7L1459.4 866.4M1450 852.1L1458.1 859.6L1464.8 858.3M1462.1 848.9L1485 846.2L1509.2 844.3L1511.4 847.5L1507.9 858.3L1503.8 870.4L1498.4 874.4L1482.8 881.2L1485 890.6L1493.1 900L1501.7 906.7L1503 916.2L1509.2 922.9L1517.3 928.3L1518.6 936.3L1524 940.4L1525.4 948.5L1532.1 957.9L1540.2 966L1548.2 971.3L1553.1 976.7L1550.9 984.8L1546.4 992.9L1550.4 1000.9L1548.2 1019.8L1544.2 1027.9L1536.1 1038.6L1522.1 1049.9L1524 1062.8L1525.4 1073.6L1532.9 1085.7L1529.4 1093.8L1525.4 1099.2L1513.2 1101.1L1506.5 1108.6L1493.1 1114.5L1479.6 1116.1L1466.1 1104.6L1450 1090.3M1904 826L1896.8 836.8L1890.6 848.9L1891.4 874.4L1890 882.5L1880.6 901.4L1867.2 928.3L1851 957.9L1837.6 976.7L1829.5 992.9L1813.3 1011.7L1799.9 1033.2L1789.1 1050.7L1773 1069.6L1756.8 1088.4L1750.1 1100.5L1736.6 1115.3L1729.9 1118.8L1721.3 1121.2L1708.4 1115.3L1700.3 1114L1688.2 1120.7L1672 1115.3L1654.5 1123.4L1640.5 1129.6" fill="none" stroke="#f0569e" stroke-width="0.85" stroke-linejoin="round"/></svg><!--/MAPSVG-->
</div>
<div id="status"></div>
<div class="abs" style="left:400px;top:1176px;width:1576px;height:1px;background:#b4b4b4"></div>
<div class="abs" style="left:187.5px;top:1157px;width:60.5px;height:20.5px;box-sizing:border-box;border:1px solid #6e6e6e;border-right:none;border-radius:5px 0 0 5px;background:linear-gradient(#7d7d7d,#8d8d8d 60%,#848484);color:#fff;font-size:13px;line-height:18px;text-align:center;text-shadow:0 1px 0 rgba(0,0,0,.3);">Layers</div>
<div class="abs" style="left:248px;top:1157px;width:70px;height:20.5px;box-sizing:border-box;border:1px solid #9a9a9a;border-radius:0 5px 5px 0;background:#fff;color:#000;font-size:13px;line-height:18px;text-align:center;">Browser</div>
<div class="abs st" style="left:1012px;top:1185px;color:#0000ee;text-decoration:underline;">There is a new plugin available</div>
<div class="abs st" style="left:1229px;top:1185px;">Coordinate:</div>
<div class="abs" style="left:1306px;top:1184px;width:300px;height:20px;box-sizing:border-box;background:#fff;border:1px solid #a8a8a8;border-top-color:#8e8e8e;"></div>
<div class="abs st" style="left:1306px;top:1186px;width:300px;text-align:center;">20.3614,-33.9960</div>
<div class="abs st" style="left:1615px;top:1185px;">Scale</div>
<div class="abs" style="left:1661px;top:1188px;width:93px;height:15px;box-sizing:border-box;background:#fff;border:1px solid #a8a8a8;border-top-color:#8e8e8e;border-radius:0 4px 4px 0;"></div>
<div class="abs" style="left:1739px;top:1189px;width:1px;height:13px;background:#c4c4c4;"></div>
<div class="abs st" style="left:1663px;top:1187px;">1:22692</div>
<div class="abs st" style="left:1805px;top:1185px;">Render</div>
<div class="abs st" style="left:1853px;top:1185px;color:#3c3c3c;">EPSG:4326</div>


<svg id="chrome" class="abs" style="left:0;top:0" width="2034" height="1289" viewBox="0 0 2034 1289">
<defs>
  <g id="hdl"><rect x="0.7" y="0.0" width="1.5" height="1.5" fill="#fff"/><rect x="1.6" y="0.9" width="1.4" height="1.4" fill="#b4b4b4"/><rect x="3.7" y="3.0" width="1.5" height="1.5" fill="#fff"/><rect x="4.6" y="3.9" width="1.4" height="1.4" fill="#b4b4b4"/><rect x="0.7" y="6.0" width="1.5" height="1.5" fill="#fff"/><rect x="1.6" y="6.9" width="1.4" height="1.4" fill="#b4b4b4"/><rect x="3.7" y="9.0" width="1.5" height="1.5" fill="#fff"/><rect x="4.6" y="9.9" width="1.4" height="1.4" fill="#b4b4b4"/><rect x="0.7" y="12.0" width="1.5" height="1.5" fill="#fff"/><rect x="1.6" y="12.9" width="1.4" height="1.4" fill="#b4b4b4"/><rect x="3.7" y="15.0" width="1.5" height="1.5" fill="#fff"/><rect x="4.6" y="15.9" width="1.4" height="1.4" fill="#b4b4b4"/><rect x="0.7" y="18.0" width="1.5" height="1.5" fill="#fff"/><rect x="1.6" y="18.9" width="1.4" height="1.4" fill="#b4b4b4"/><rect x="3.7" y="21.0" width="1.5" height="1.5" fill="#fff"/><rect x="4.6" y="21.9" width="1.4" height="1.4" fill="#b4b4b4"/></g>
  <g id="hdlh"><rect x="0.3" y="0.0" width="1.5" height="1.5" fill="#fff"/><rect x="1.2" y="0.9" width="1.4" height="1.4" fill="#b9b9b9"/><rect x="3.3" y="3.0" width="1.5" height="1.5" fill="#fff"/><rect x="4.2" y="3.9" width="1.4" height="1.4" fill="#b9b9b9"/><rect x="6.3" y="0.0" width="1.5" height="1.5" fill="#fff"/><rect x="7.2" y="0.9" width="1.4" height="1.4" fill="#b9b9b9"/><rect x="9.3" y="3.0" width="1.5" height="1.5" fill="#fff"/><rect x="10.2" y="3.9" width="1.4" height="1.4" fill="#b9b9b9"/><rect x="12.3" y="0.0" width="1.5" height="1.5" fill="#fff"/><rect x="13.2" y="0.9" width="1.4" height="1.4" fill="#b9b9b9"/><rect x="15.3" y="3.0" width="1.5" height="1.5" fill="#fff"/><rect x="16.2" y="3.9" width="1.4" height="1.4" fill="#b9b9b9"/><rect x="18.3" y="0.0" width="1.5" height="1.5" fill="#fff"/><rect x="19.2" y="0.9" width="1.4" height="1.4" fill="#b9b9b9"/><rect x="21.3" y="3.0" width="1.5" height="1.5" fill="#fff"/><rect x="22.2" y="3.9" width="1.4" height="1.4" fill="#b9b9b9"/><rect x="24.3" y="0.0" width="1.5" height="1.5" fill="#fff"/><rect x="25.2" y="0.9" width="1.4" height="1.4" fill="#b9b9b9"/><rect x="27.3" y="3.0" width="1.5" height="1.5" fill="#fff"/><rect x="28.2" y="3.9" width="1.4" height="1.4" fill="#b9b9b9"/><rect x="30.3" y="0.0" width="1.5" height="1.5" fill="#fff"/><rect x="31.2" y="0.9" width="1.4" height="1.4" fill="#b9b9b9"/><rect x="33.3" y="3.0" width="1.5" height="1.5" fill="#fff"/><rect x="34.2" y="3.9" width="1.4" height="1.4" fill="#b9b9b9"/></g>
  <path id="dd" d="M0 0h8l-4 7z" fill="#5a5a5a"/>
  <g id="plus"><rect x="0" y="0" width="9.600" height="9.600" rx="2" fill="#5d9456" stroke="#4f8349" stroke-width=".5"/><path d="M4.800 1.700v6.200M1.700 4.800h6.200" stroke="#fff" stroke-width="2.100"/></g>
  <g id="star"><rect x="0.3" y="0.3" width="9.8" height="9.8" rx="2" fill="#d4aa1a" stroke="#b8920e" stroke-width=".6"/><path d="M5.25 1.6v7.3M2.1 3.4l6.3 3.7M8.4 3.4l-6.3 3.7" stroke="#fff" stroke-width="1.5"/></g>
  <g id="lens"><path d="M-5.800 6.100l-8.200 7.400" stroke="#222" stroke-width="3.300" stroke-linecap="butt"/><path d="M-7.500 7.700l-6.200 5.600" stroke="#f5c91e" stroke-width="2.100" stroke-linecap="butt"/><circle cx="0" cy="0" r="8.4" fill="#f4f4f4" fill-opacity=".85" stroke="#7a7a7a" stroke-width="1.1"/><circle cx="-6.3" cy="6.7" r="1.6" fill="#111"/></g>
  <g id="lensg" opacity=".55"><path d="M-5.800 6.100l-8.200 7.400" stroke="#777" stroke-width="3.300" stroke-linecap="butt"/><path d="M-7.500 7.700l-6.200 5.600" stroke="#f3d76a" stroke-width="2.100"/><circle cx="0" cy="0" r="8.4" fill="#f1f1f1" fill-opacity=".85" stroke="#8a8a8a" stroke-width="1.1"/><circle cx="-6.3" cy="6.7" r="1.6" fill="#666"/></g>
  <g id="floppy"><rect x="0" y="0" width="20" height="21.4" rx="2.2" fill="#6e96c9" stroke="#4e77ad" stroke-width="1"/><rect x="3" y=".8" width="14" height="9.6" fill="#f1f1f1" stroke="#9aa" stroke-width=".4"/><path d="M4.5 3.3h11M4.5 5.5h11M4.5 7.7h11" stroke="#555" stroke-width="1"/><rect x="4.3" y="14" width="11.5" height="6.6" fill="#e9e9e9"/><rect x="5.6" y="15" width="2.6" height="4.6" fill="#3b5f92"/></g>
</defs>
<!-- ===== toolbar 1 ===== -->
<use href="#hdl" x="64" y="64.5"/>
<path d="M77.6 65.5h12.6l4.6 4.7v16.3h-17.2z" fill="#fff" stroke="#555" stroke-width="1.1" stroke-linejoin="round"/><path d="M90.2 65.5v4.7h4.6" fill="#ddd" stroke="#555" stroke-width=".9"/>
<path d="M113 84.2v-15.8q0-1 1-1h5.2l1.6 2h10.6q1 0 1 1v2.2" fill="#f3cf4c" stroke="#c9a93a" stroke-width=".9"/><path d="M113 84.4l2.6-11.2q.2-.9 1.2-.9h17.4q1.1 0 .8 1l-2.6 10.2q-.2.9-1.2.9z" fill="#ffdc5b" stroke="#cfae3d" stroke-width=".9"/>
<use href="#floppy" transform="translate(152.5 64.4) scale(.955 .965)"/>
<use href="#floppy" transform="translate(190.4 64.4) scale(.955 .965)"/>
<rect x="202.3" y="78.300" width="9.600" height="9.600" rx="2.2" fill="#5d9a57" stroke="#4a8044" stroke-width=".6"/><path d="M204.6 85.6l5-5" stroke="#fff" stroke-width="2.2" stroke-linecap="round"/>
<path d="M226.5 65.8h17l4 4v10.5h-21z" fill="#fff" stroke="#666" stroke-width="1"/><path d="M243.5 65.8v4h4" fill="#e4e4e4" stroke="#666" stroke-width=".8"/>
<use href="#star" x="240" y="77.8"/>
<path d="M264.5 65.8h17l4 4v10.5h-21z" fill="#fff" stroke="#666" stroke-width="1"/><path d="M281.5 65.8v4h4" fill="#e4e4e4" stroke="#666" stroke-width=".8"/>
<path d="M278.5 77l8 9" stroke="#555" stroke-width="4" stroke-linecap="round"/><path d="M279 77.6l7.2 8" stroke="#e7c557" stroke-width="2.4" stroke-linecap="round"/><path d="M274 70.5a4.2 4.2 0 1 0 4.5 -2.2l.3 3.2l-2.6 1.4z" fill="#e9e9e9" stroke="#555" stroke-width=".9"/>
<use href="#hdl" x="301" y="64.5"/>
<rect x="306.300" y="59.300" width="33.500" height="33.700" fill="url(#pressed)"/>
<rect x="306.300" y="59.300" width="33.500" height="33.700" fill="url(#pressedv)"/><linearGradient id="pressedv" x1="0" y1="0" x2="0" y2="1"><stop offset="0" stop-color="#fff" stop-opacity=".22"/><stop offset=".4" stop-color="#fff" stop-opacity="0"/><stop offset="1" stop-color="#000" stop-opacity=".04"/></linearGradient><linearGradient id="pressed" x1="0" y1="0" x2="1" y2="0"><stop offset="0" stop-color="#9d9d9d"/><stop offset=".5" stop-color="#b1b1b1"/><stop offset="1" stop-color="#bebebe"/></linearGradient>
<path d="M321.300 86.600L318.500 82L315.600 77.600Q314 75.300 314.500 73.800Q315.300 72.200 317.100 72.700L319.400 75.300V65.600Q319.500 64.200 320.850 64.200Q322.200 64.200 322.300 65.600V66.500Q322.500 65.300 324 65.300Q325.500 65.300 325.600 66.600V68.700Q325.800 67.500 327.200 67.500Q328.700 67.500 328.800 68.900V70.200Q329 69 330.300 69Q331.700 69 331.800 70.300V78L331 82.600L329.800 86.600Z" fill="#fff" stroke="#111" stroke-width="1.150" stroke-linejoin="round"/>
<path d="M322.400 66.500v6M325.700 68.700v4.300M328.900 70.200v3.600" stroke="#111" stroke-width="1"/>
<rect x="349" y="64.100" width="16.800" height="12.200" fill="#f8e33c"/><path d="M349.500 76.300V64.600H365.800" fill="none" stroke="#111" stroke-width="1.100" stroke-dasharray="1.800 1.600"/>
<path d="M360.500 63l11.500 11.700l-11.500 11.700l-11.500-11.700z" fill="#5b8fcc" opacity=".0"/>
<g fill="#6497ce" stroke="#2f5f9c" stroke-width=".7" stroke-linejoin="round"><path d="M361 65.300l4.700 4.500h-2.700v3h-4v-3h-2.700z"/><path d="M361 86.900l4.700-4.500h-2.700v-3h-4v3h-2.700z"/><path d="M349.800 76l4.500-4.700v2.700h3v4h-3v2.700z"/><path d="M372.200 76l-4.500-4.700v2.700h-3v4h3v2.700z"/></g>
<use href="#lens" x="401.500" y="73.300"/><path d="M401.500 68.600v9.400M396.800 73.300h9.400" stroke="#4f86c6" stroke-width="2.200"/>
<use href="#lens" x="439.500" y="73.300"/><path d="M434.800 73.300h9.400" stroke="#4f86c6" stroke-width="2.200"/>
<use href="#lensg" x="477.700" y="73.300"/><text x="477.700" y="77" font-size="9" font-weight="bold" text-anchor="middle" fill="#aaa" font-family="Liberation Sans, sans-serif">1:1</text>
<use href="#lens" x="515.700" y="73.500"/>
<g fill="#6a9bd0" stroke="#3b6ca6" stroke-width=".6" stroke-linejoin="round"><path d="M504.900 64.100h7.800l-2.600 2.600l3.400 3.400l-2.400 2.400l-3.400-3.400l-2.800 2.800z"/><path d="M524.900 64.100h-7.800l2.600 2.600l-3.400 3.400l2.400 2.400l3.400-3.400l2.800 2.800z"/><path d="M524.900 83.800h-7.800l2.600-2.600l-3.400-3.400l2.400-2.400l3.400 3.400l2.800-2.800z"/></g>
<rect x="540.500" y="66" width="18.500" height="13" fill="#f6e23f" stroke="#222" stroke-width="1" stroke-dasharray="2 1.500"/>
<use href="#lens" x="554.500" y="72.700"/>
<rect x="581.500" y="68.500" width="17" height="14" fill="#e6d3e0" stroke="#8c7a88" stroke-width=".9"/>
<use href="#lens" x="592.500" y="72.500"/>
<use href="#lensg" x="629.200" y="73.300"/><rect x="628" y="76.800" width="10.800" height="10.800" fill="#a9c1e0" stroke="#8facd0" stroke-width=".6"/><path d="M636 79.200l-5 3l5 3" fill="none" stroke="#fff" stroke-width="1.700"/>
<use href="#lensg" x="667.300" y="73.300"/><rect x="666.100" y="76.800" width="10.800" height="10.800" fill="#a9c1e0" stroke="#8facd0" stroke-width=".6"/><path d="M669 79.200l5 3l-5 3" fill="none" stroke="#fff" stroke-width="1.700"/>
<g fill="#3f83cf" stroke="#2c6bb4" stroke-width=".5"><path d="M693.500 75.500q-.5-9 9-10q4 0 6.500 2l2.500-2.500l1 9h-9l2.800-2.800q-2-1.600-4.300-1.400q-4.200.8-4.300 5.200z"/><path d="M713 76.500q.5 9-9 10q-4 0-6.500-2l-2.500 2.500l-1-9h9l-2.800 2.800q2 1.600 4.300 1.400q4.200-.8 4.300-5.200z"/></g>
<use href="#hdl" x="728" y="64.500"/>
<circle cx="746.500" cy="72.700" r="8.600" fill="#5f8fcb" stroke="#4a78b5" stroke-width=".8"/><text x="746.300" y="78" font-size="15" font-weight="bold" font-style="italic" text-anchor="middle" fill="#fff" font-family="Liberation Serif, serif">i</text>
<path d="M750 74.500l11.500 6.300l-4.600 1.200l3.300 4.800l-2 1.300l-3.200-4.800l-3 3.500z" fill="#fff" stroke="#222" stroke-width=".9" stroke-linejoin="round"/>

<!-- run action -->
<g opacity=".75"><path d="M802.0 72.5 L802.0 75.1 L799.6 75.9 L798.8 77.8 L800.0 80.0 L798.1 81.9 L795.9 80.7 L794.0 81.5 L793.2 83.9 L790.6 83.9 L789.8 81.5 L787.9 80.7 L785.7 81.9 L783.8 80.0 L785.0 77.8 L784.2 75.9 L781.8 75.1 L781.8 72.5 L784.2 71.7 L785.0 69.8 L783.8 67.6 L785.7 65.7 L787.9 66.9 L789.8 66.1 L790.6 63.7 L793.2 63.7 L794.0 66.1 L795.9 66.9 L798.1 65.7 L800.0 67.6 L798.8 69.8 L799.6 71.7Z" fill="#ececec" stroke="#9c9c9c" stroke-width=".9" stroke-linejoin="round"/><circle cx="792" cy="73.900" r="5.700" fill="#a9c3e2" stroke="#8aa6c8" stroke-width=".8"/><path d="M790 71.200l4.800 2.800l-4.800 2.800z" fill="#fff"/>
<path d="M796.500 77.500l8.800 5l-3.500 1l2.500 3.700l-1.600 1l-2.500-3.700l-2.300 2.700z" fill="#f4f4f4" stroke="#9a9a9a" stroke-width=".8" stroke-linejoin="round"/></g>
<use href="#dd" x="808.300" y="78.300"/>
<!-- select -->
<rect x="832.800" y="64.800" width="12.600" height="12.400" fill="#f7e344" stroke="#b9a52c" stroke-width=".8"/>
<rect x="848.300" y="64.800" width="7" height="12.400" fill="#e9e9e9" stroke="#8f8f8f" stroke-width=".8"/>
<rect x="832.800" y="80.800" width="12.600" height="6.600" fill="#e9e9e9" stroke="#8f8f8f" stroke-width=".8"/>
<path d="M840 71.300l12.800 7l-5 1.400l3.600 5.300l-2.200 1.400l-3.500-5.300l-3.400 3.900z" fill="#fff" stroke="#111" stroke-width="1" stroke-linejoin="round"/>
<use href="#dd" x="858.300" y="78.300"/>
<!-- deselect -->
<rect x="879.500" y="67.500" width="14.500" height="14" fill="#f7e650" stroke="#b79f1a" stroke-width="1" stroke-dasharray="2 1.300"/>
<rect x="889.300" y="77" width="10.500" height="10.500" rx="2.200" fill="#d8202a" stroke="#b0141c" stroke-width=".6"/><circle cx="894.550" cy="82.250" r="3.300" fill="none" stroke="#fff" stroke-width="1.300"/><path d="M892.300 84.500l4.500-4.500" stroke="#fff" stroke-width="1.300"/>
<!-- expression -->
<text x="915.800" y="79.900" font-size="30" fill="#5a2a6e" font-family="Liberation Serif, serif">&#949;</text>
<rect x="925.500" y="75.500" width="12.500" height="12" fill="#f7e650" stroke="#b79f1a" stroke-width="1" stroke-dasharray="1.600 1.200"/>
<!-- attribute table -->
<rect x="955.200" y="66.500" width="18.600" height="19" fill="#fff" stroke="#3f6688" stroke-width="1.300"/><rect x="955.200" y="66.500" width="18.600" height="4.800" fill="#dfe8f0" stroke="#3f6688" stroke-width="1.300"/>
<path d="M957.500 69h3.500M963 69h9" stroke="#3f6688" stroke-width="1.600"/>
<path d="M957.500 74.200h3.500M963 74.200h9M957.500 77.400h3.500M963 77.400h9M957.500 80.600h3.500M963 80.600h9M957.500 83.500h3.500M963 83.500h9" stroke="#3f6688" stroke-width="1.200"/>
<!-- abacus -->
<path d="M991.500 66.500v18.500M1012.500 66.500v18.500M989.500 85.800h25" stroke="#8c8c8c" stroke-width="1.200" fill="none"/><path d="M991.500 70h21M991.500 76.800h21M991.500 83h21" stroke="#9a9a9a" stroke-width=".8"/>
<g stroke-width=".9" fill="#fff"><path d="M1001.500 67.200l2.800 2.800l-2.800 2.800l-2.800-2.800z" stroke="#c9606a"/><path d="M1007.500 67.200l2.800 2.800l-2.800 2.800l-2.800-2.800z" stroke="#c9606a"/><path d="M996.500 74l2.800 2.800l-2.800 2.800l-2.800-2.800z" stroke="#7ab07a" fill="#dcecd9"/><path d="M1002.500 74l2.800 2.800l-2.800 2.800l-2.800-2.800z" stroke="#7ab07a" fill="#dcecd9"/><path d="M996.500 80.200l2.800 2.800l-2.800 2.800l-2.800-2.800z" stroke="#7a9cc0" fill="#dbe6f2"/><path d="M1008 80.200l2.800 2.800l-2.800 2.800l-2.800-2.800z" stroke="#7a9cc0" fill="#dbe6f2"/></g>
<use href="#dd" x="1062.500" y="78.300"/>
<!-- map tips -->
<path d="M1083 66.500h14q3 0 3 3v7.500q0 3-3 3h-7.500l-5 4.500l1.200-4.500h-2.700q-3 0-3-3v-7.500q0-3 3-3z" fill="#f8ea90" stroke="#cfaa22" stroke-width="1.100" stroke-linejoin="round"/><path d="M1083 68.500h14" stroke="#fdf6c8" stroke-width="1.600" stroke-linecap="round"/>
<!-- new bookmark -->
<rect x="1119.500" y="69.500" width="16.500" height="11.500" fill="#efefef" stroke="#444" stroke-width="1" stroke-dasharray="1.200 1.200"/><path d="M1128.500 71v-3h2v-1.800h3.200v4.800z" fill="#f7df3a" stroke="#c7a722" stroke-width=".7"/>
<use href="#star" x="1129.300" y="77"/>
<rect x="1157.500" y="69.500" width="16.500" height="11.500" fill="#efefef" stroke="#444" stroke-width="1" stroke-dasharray="1.200 1.200"/><path d="M1166.500 71v-3h2v-1.800h3.200v4.800z" fill="#f7df3a" stroke="#c7a722" stroke-width=".7"/>
<!-- text annotation -->
<path d="M1203.800 66.500h17.800v15.800h-13.800l-8.400 3.800l4.400-5z" fill="#d9e6f0" stroke="#8d9ba8" stroke-width="1" stroke-linejoin="round"/><text x="1212.600" y="79" font-size="14" text-anchor="middle" fill="#333" font-family="Liberation Serif, serif">T</text>
<use href="#dd" x="1224" y="78.300"/>
<use href="#hdl" x="1242" y="64.500"/>
<!-- help -->
<rect x="1253.300" y="65.500" width="19.600" height="20.300" fill="#6c96cb" stroke="#3a5e90" stroke-width=".8"/><rect x="1253.300" y="65.500" width="4.600" height="20.300" fill="#2b3d52"/><text x="1265.300" y="81" font-size="15" text-anchor="middle" fill="#fff" font-family="Liberation Serif, serif">?</text>
<!-- whats this -->
<path d="M1290.800 65.300l10.600 9.800l-4.300.4l2.600 5.800l-2 1l-2.700-5.800l-3.600 3z" fill="#fff" stroke="#222" stroke-width=".9" stroke-linejoin="round"/><text x="1306.800" y="85.500" font-size="24" text-anchor="middle" fill="#111" font-family="Liberation Serif, serif">?</text>

<!-- ===== toolbar 2 ===== -->
<defs>
  <g id="tagg"><path d="M0 5.100l5.200-5.100h15.200v10.200h-15.200z" fill="#f1e28e" stroke="#cdbb63" stroke-width=".9" stroke-linejoin="round"/></g>
  <g id="pencil"><path d="M0 0l4.800 2.200l-9.700 18.600l-3.600 3.400l-1.200-5.600z" fill="#f3dc2c" stroke="#6b6420" stroke-width=".8" stroke-linejoin="round"/><path d="M-9.700 18.600l1.200 5.600l3.600-3.400z" fill="#e8e8e8" stroke="#555" stroke-width=".7"/><path d="M-8.500 24.200l.6-2.200l1.200 1z" fill="#222"/><path d="M1.500 .7l-9.600 18.600M3.200 1.500l-9.600 18.600" stroke="#fff7a0" stroke-width=".8"/><path d="M0 0l4.800 2.200l-.9 1.800l-4.800-2.200z" fill="#f7f7f7" stroke="#777" stroke-width=".6"/></g>
  <g id="arrb"><rect x="0" y="0" width="10.600" height="10.600" fill="#6f96c8" stroke="#567fb5" stroke-width=".6"/><path d="M1.500 3.900h4v-2.300l4 3.700l-4 3.700v-2.300h-4z" fill="#fff"/></g>
</defs>
<use href="#hdl" x="64" y="100.500"/>
<g opacity="0.7"><path d="M81.5 101.1 L88.2 103.8 L81.6 120.0 L74.9 117.3 Z" fill="#e6a58a" stroke="#b98b76" stroke-width="0.7" stroke-linejoin="round"/><path d="M74.9 117.3 L81.6 120.0 L76.2 123.7 Z" fill="#e2e2e2" stroke="#b98b76" stroke-width="0.63" stroke-linejoin="round"/><path d="M76.2 123.7 L77.7 122.3 L76.0 121.7 Z" fill="#888"/><path d="M81.5 101.1 L88.2 103.8 L87.4 105.6 L80.8 102.9 Z" fill="#f6f6f6" stroke="#b98b76" stroke-width="0.48999999999999994"/></g><g opacity="0.72"><path d="M86.6 101.1 L93.5 103.9 L86.7 120.4 L79.9 117.6 Z" fill="#e9906c" stroke="#b0785e" stroke-width="0.7" stroke-linejoin="round"/><path d="M90.0 102.5 L83.3 119.0" stroke="#f3c24a" stroke-width="1.4"/><path d="M79.9 117.6 L86.7 120.4 L81.3 124.0 Z" fill="#e6e6e6" stroke="#b0785e" stroke-width="0.63" stroke-linejoin="round"/><path d="M81.3 124.0 L82.8 122.7 L81.1 122.0 Z" fill="#777"/><path d="M86.6 101.1 L93.5 103.9 L92.7 105.7 L85.9 102.9 Z" fill="#f6f6f6" stroke="#b0785e" stroke-width="0.48999999999999994"/></g>
<path d="M93.500 118.800h6.400l-3.200 4.600z" fill="#6a6a6a"/>
<g opacity="1"><path d="M124.3 101.0 L130.7 104.4 L122.1 120.4 L115.7 117.1 Z" fill="#f0d824" stroke="#5f5a1c" stroke-width="0.8" stroke-linejoin="round"/><path d="M126.6 102.2 L118.0 118.3" stroke="#fff59a" stroke-width="1.2"/><path d="M128.7 103.4 L120.2 119.4" stroke="#c9b31a" stroke-width="0.9"/><path d="M115.7 117.1 L122.1 120.4 L116.3 123.7 Z" fill="#e8e8e8" stroke="#5f5a1c" stroke-width="0.7200000000000001" stroke-linejoin="round"/><path d="M116.3 123.7 L117.9 122.5 L116.3 121.7 Z" fill="#222"/><path d="M124.3 101.0 L130.7 104.4 L129.8 106.1 L123.4 102.7 Z" fill="#f6f6f6" stroke="#5f5a1c" stroke-width="0.5599999999999999"/></g>
<g opacity=".55"><use href="#floppy" transform="translate(152 101.6) scale(.95 .9)"/></g>
<g opacity="0.8"><path d="M164.5 108.6 L168.7 110.4 L164.5 120.1 L160.3 118.2 Z" fill="#e9906c" stroke="#b0785e" stroke-width="0.6" stroke-linejoin="round"/><path d="M166.6 109.5 L162.4 119.1" stroke="#f3c24a" stroke-width="1.0"/><path d="M160.3 118.2 L164.5 120.1 L161.1 122.3 Z" fill="#e6e6e6" stroke="#b0785e" stroke-width="0.54" stroke-linejoin="round"/><path d="M161.1 122.3 L162.6 121.0 L160.9 120.3 Z" fill="#777"/></g>
<!-- add feature -->
<g opacity=".7"><path d="M191.600 101.500l7 12l5.900-11.200h5.400" fill="none" stroke="#5d7f9c" stroke-width="1"/><circle cx="191.600" cy="101.500" r="1.400" fill="#fff" stroke="#5d7f9c" stroke-width=".8"/><circle cx="198.600" cy="113.500" r="1.400" fill="#fff" stroke="#5d7f9c" stroke-width=".8"/><circle cx="204.500" cy="102.300" r="1.400" fill="#fff" stroke="#5d7f9c" stroke-width=".8"/><circle cx="209.900" cy="102.300" r="1.400" fill="#fff" stroke="#5d7f9c" stroke-width=".8"/></g>
<g opacity=".6"><use href="#star" x="201.300" y="113.100"/></g>
<!-- move feature -->
<path d="M228 108q-1.500-5 4-6q5-.800 9 .8q3 1 6-.4q2.500.6 1.600 5q-.8 4.500-5.600 4.800q-3 0-5.500-1.200q-3 .8-6 1q-3.200-.4-3.500-4z" fill="#b9d6b6" stroke="#909a90" stroke-width=".9"/>
<g opacity=".8"><use href="#arrb" x="239.300" y="113"/></g>
<!-- node tool -->
<g opacity=".8"><path d="M273.500 106.500l-7 14M274 106h12" stroke="#777" stroke-width=".9" fill="none"/><circle cx="274" cy="106.300" r="2.600" fill="#cfe3cc" stroke="#8aa88a" stroke-width=".8"/>
<path d="M276.500 110l9 9.500" stroke="#d58a3c" stroke-width="2.600" stroke-linecap="round"/><path d="M285.500 111l-8.500 9" stroke="#e6d34a" stroke-width="2" stroke-linecap="round"/><path d="M276 112q-.5-3.500 3-3.800" stroke="#999" stroke-width="1.600" fill="none"/><path d="M283.500 113.500l2.500-2.700" stroke="#999" stroke-width="2"/></g>
<!-- delete selected -->
<rect x="305.700" y="103.500" width="14" height="14" fill="#efe79c" stroke="#c9b848" stroke-width="1" stroke-dasharray="2 1.300"/>
<rect x="316.300" y="114" width="9.800" height="9.600" rx="1.600" fill="#ea8a90" stroke="#d96a72" stroke-width=".6"/><path d="M318.500 116.200l5.400 5.200M323.900 116.200l-5.400 5.200" stroke="#fff" stroke-width="1.700"/>
<!-- scissors -->
<g opacity=".85"><path d="M341 105.300l17 9.500M340.500 112.500l18-3" stroke="#8a8a8a" stroke-width="1.300"/><ellipse cx="360" cy="108.800" rx="3.600" ry="2.200" transform="rotate(-22 360 108.800)" fill="none" stroke="#d9707a" stroke-width="1.500"/><ellipse cx="360" cy="117" rx="3.600" ry="2.200" transform="rotate(32 360 117)" fill="none" stroke="#d9707a" stroke-width="1.500"/></g>
<!-- copy -->
<g opacity=".8"><path d="M387 103.700h7l3.400 3.400v11.400h-10.400z" fill="#f1f1f1" stroke="#b5b5b5" stroke-width=".9"/><path d="M381.500 105.600h8l3.600 3.600v11.400h-11.600z" fill="#f6f6f6" stroke="#a5a5a5" stroke-width=".9"/><path d="M389.500 105.600v3.600h3.600" fill="none" stroke="#a5a5a5" stroke-width=".8"/><path d="M383.500 111.500h7.600M383.500 113.800h7.600M383.500 116.100h7.600M383.500 118.400h7.600" stroke="#aaa" stroke-width=".9"/></g>
<!-- paste -->
<rect x="420.500" y="103" width="15" height="18.600" rx="1" fill="#f3e6d6" stroke="#dfbb92" stroke-width="1.100"/><rect x="424.500" y="101.500" width="7" height="3.600" rx="1" fill="#f5ebdd" stroke="#dfbb92" stroke-width="1"/>
<path d="M422.800 105.500h8l2.400 2.400v11.400h-10.400z" fill="#f7f7f7" stroke="#a9a9a9" stroke-width=".8"/><path d="M424.500 110.500h7M424.500 112.700h7M424.500 114.900h7M424.500 117.100h7" stroke="#aaa" stroke-width=".9"/>
<use href="#hdl" x="453.500" y="100.500"/>
<!-- label -->
<path d="M463.300 109.300l5.200-5.100h15.200v10.200h-15.200z" fill="#f5d91f" stroke="#b79a10" stroke-width=".9" stroke-linejoin="round"/><text x="476" y="112.6" font-size="9.3" font-weight="bold" text-anchor="middle" fill="#1a1a1a" font-family="Liberation Sans, sans-serif">abc</text>
<rect x="501.500" y="104.200" width="23.400" height="17.400" fill="#d8e5f4" stroke="#6f9cd9" stroke-width="1"/>
<path d="M502.500 109.300l4.600-4.500h13.600v9h-13.600z" fill="#f5d91f" stroke="#b79a10" stroke-width=".8" stroke-linejoin="round"/><text x="512" y="112.2" font-size="8" font-weight="bold" text-anchor="middle" fill="#1a1a1a" font-family="Liberation Sans, sans-serif">ab</text>
<path d="M518 108.500q1-1.500 2 0l.6 4.500h-3.200z" fill="#f4f4f4" stroke="#999" stroke-width=".5"/><circle cx="519.200" cy="117" r="4.200" fill="#b5121d"/><circle cx="518" cy="115.700" r="1.300" fill="#e0606a" opacity=".8"/>
<use href="#tagg" x="539.300" y="104.400"/><text x="549" y="112.6" font-size="8.8" font-weight="bold" text-anchor="middle" fill="#7a7a6a" font-family="Liberation Sans, sans-serif">ab</text>
<path d="M556 109q1-1.500 2 0l.6 5h-3.200z" fill="#f4f4f4" stroke="#aaa" stroke-width=".5"/><circle cx="558" cy="118.200" r="4.600" fill="#c8747c"/>
<use href="#tagg" x="577.300" y="104.400"/><text x="589" y="112.6" font-size="8.8" font-weight="bold" text-anchor="middle" fill="#7a7a6a" font-family="Liberation Sans, sans-serif">abc</text>
<path d="M585 119q8-7.500 15.500 0q-7.500 7-15.500 0z" fill="#f1f1f1" stroke="#8a8a8a" stroke-width=".8"/><circle cx="592.800" cy="119" r="2.800" fill="#8fb3e0"/><circle cx="592.800" cy="119" r="1.200" fill="#333"/>
<use href="#tagg" x="615.300" y="104.400"/><text x="627" y="112.6" font-size="8.8" font-weight="bold" text-anchor="middle" fill="#7a7a6a" font-family="Liberation Sans, sans-serif">abc</text>
<g opacity=".85"><use href="#arrb" x="628.300" y="113"/></g>
<use href="#tagg" x="653.300" y="104.400"/><text x="665" y="112.6" font-size="8.8" font-weight="bold" text-anchor="middle" fill="#7a7a6a" font-family="Liberation Sans, sans-serif">abc</text>
<g opacity=".85"><rect x="666.200" y="113" width="10.600" height="10.600" fill="#7f9fcc" stroke="#6587b8" stroke-width=".6"/><path d="M669 120.500a3.200 3.200 0 1 1 3.800 1.500" fill="none" stroke="#fff" stroke-width="1.300"/><path d="M668.500 121.800h5" stroke="#fff" stroke-width="1.200"/><circle cx="671.500" cy="118.500" r=".9" fill="#fff"/></g>
<use href="#tagg" x="691.400" y="104.400"/><text x="703" y="112.6" font-size="8.8" font-weight="bold" text-anchor="middle" fill="#7a7a6a" font-family="Liberation Sans, sans-serif">abc</text>
<g opacity=".9"><rect x="704.500" y="113" width="10.600" height="10.600" fill="#dcc66a" stroke="#c9b252" stroke-width=".6"/><path d="M706.500 121.800l1-3l5-4.500l1.800 1.800l-5 4.700z" fill="#fff"/></g>
<use href="#hdl" x="728" y="100.500"/><use href="#hdl" x="741" y="100.500"/>

<!-- ===== left toolbar ===== -->
<use href="#hdlh" x="64.7" y="136.1"/>
<path d="M71.5 149.4L77.8 164.3L84.5 149.1L90.9 149.6" fill="none" stroke="#3d5a78" stroke-width="1.3" stroke-linejoin="round"/><circle cx="71.5" cy="149.4" r="2.2" fill="#f4f4f4" stroke="#3d5a78" stroke-width="1.1"/><circle cx="77.8" cy="164.3" r="2.2" fill="#f4f4f4" stroke="#3d5a78" stroke-width="1.1"/><circle cx="84.5" cy="149.1" r="2.2" fill="#f4f4f4" stroke="#3d5a78" stroke-width="1.1"/><circle cx="90.9" cy="149.6" r="2.2" fill="#f4f4f4" stroke="#3d5a78" stroke-width="1.1"/><use href="#plus" x="83.3" y="161.3"/>
<!-- raster -->
<g><rect x="69.1" y="185" width="19.5" height="13.2" fill="#6d9aca"/><rect x="69.1" y="198.2" width="13" height="6.6" fill="#6d9aca"/><g fill="#24405f"><rect x="69.1" y="185" width="6.5" height="6.600"/><rect x="82.100" y="185" width="6.500" height="6.600"/><rect x="75.600" y="191.600" width="6.500" height="6.600"/><rect x="69.100" y="198.200" width="6.500" height="6.600"/></g></g>
<use href="#plus" x="83.8" y="199.8"/>
<!-- postgis elephant -->
<path d="M72 224.300C68.800 226 68.800 233.300 71.800 236.200C73.300 237.600 75.300 236.800 76 235.200L76.600 237.500C77.200 241.300 82 241.600 82.500 238L83 234.300C86 234.800 87.600 231.300 87.100 227.600C86.600 224 83 222.900 80.500 223.900C78 222.900 74.500 222.900 72 224.300Z" fill="#6b98c8" stroke="#2a456c" stroke-width="1.100" stroke-linejoin="round"/>
<path d="M75.300 225.300C74.300 229 74.800 233.200 76 235.200M81.200 224.800C82.700 228 82.700 231.500 81.700 234M78 226.500C77.300 229.500 77.600 232 78.300 234" fill="none" stroke="#2a456c" stroke-width=".9"/><path d="M83 234.400l3.600-.5" stroke="#2a456c" stroke-width="1.100"/>
<use href="#plus" x="83.8" y="238.1"/>
<!-- spatialite feather -->
<path d="M91.900 261.100C85 262 79.700 266.300 76 271C72.600 275.500 70.200 280.700 69.300 284.900C70 283 70.500 282 71.500 280.800C74 280.300 76.500 279 79.500 277C84 273.700 88.500 269.500 90.200 266.500C91.300 264.500 91.800 262.800 91.900 261.100Z" fill="#8fb4de" stroke="#2a456c" stroke-width="1" stroke-linejoin="round"/>
<path d="M90.500 262.500C83 267 75.500 274 70.300 282.500" fill="none" stroke="#2a456c" stroke-width=".7"/><path d="M80 267.500l5.500-3M76.500 271.500l8-4.500M74 275.500l8-4" stroke="#dfeaf7" stroke-width=".7"/>
<use href="#plus" x="83.8" y="275.9"/>
<!-- mssql sail -->
<path d="M69.700 299.400C77 299.500 83 300 86.700 302C90 304 92 307 92.800 309.800C88 311 84 312.900 79 315C75.400 316.400 72 318.500 69.300 320.300C72 316.500 73.200 313.500 73.400 310C73.400 306 72 302.500 69.700 299.400Z" fill="#6b98c8" stroke="#1f3757" stroke-width="1.200" stroke-linejoin="round"/>
<path d="M76 300C78.500 305 78.800 310.500 77.500 315.500M81.500 300.700C84 305 84.300 309 83.300 313.200M86.700 302.500C88.600 305.500 89 308 88.500 311" fill="none" stroke="#1f3757" stroke-width=".9"/>
<use href="#plus" x="83.8" y="313.9"/>
<!-- WMS globe -->
<circle cx="81" cy="347.200" r="11.500" fill="#c4d8ee" stroke="#5f8fcb" stroke-width="1"/>
<path d="M72.500 343.500h4l.5 2.500h-3zM78 342h5.500l-.5 3h-4zM85 342.500h4.500l-1 3.500h-2.500zM74.500 349.500l2.500.5l-.5 4.500h-1.500zM80.500 348.500h3l-.5 5l-2 1zM86.500 349l2 .5l-.5 2.500z" fill="#27426a" opacity=".85"/><path d="M69.500 347.200h23" stroke="#eef4fb" stroke-width="1"/><path d="M81 335.700v23M75 337.500q-3 10 0 19.500M87 337.500q3 10 0 19.500" stroke="#9dbde3" stroke-width=".6" fill="none"/>
<use href="#plus" x="83.8" y="351.8"/>
<!-- WCS globe -->
<clipPath id="wcsc"><circle cx="81" cy="385.300" r="11.700"/></clipPath>
<g clip-path="url(#wcsc)"><rect x="69" y="373" width="24" height="25" fill="#6b98c8"/>
<rect x="69" y="380.500" width="7.300" height="4.800" fill="#1d3557"/><rect x="85.400" y="380.500" width="8" height="4.800" fill="#1d3557"/><rect x="76.300" y="385.300" width="9.100" height="4.700" fill="#1d3557"/><rect x="69" y="390" width="7.300" height="8" fill="#1d3557"/><rect x="85.400" y="390" width="8" height="8" fill="#1d3557"/>
<path d="M77.500 379.500l3.500-4l3.500 4z" fill="#1d3557"/><rect x="69" y="373" width="7.300" height="7.500" fill="#33568a"/><rect x="85.400" y="373" width="8" height="7.500" fill="#33568a"/>
<path d="M69 380.500h24M69 385.300h24M69 390h24" stroke="#fff" stroke-width=".9"/><path d="M76.600 373.500q-3.500 12 0 24M85.400 373.500q3.500 12 0 24" stroke="#fff" stroke-width=".9" fill="none"/></g>
<circle cx="81" cy="385.300" r="11.700" fill="none" stroke="#16263f" stroke-width="1.300"/>
<use href="#plus" x="83.8" y="389.7"/>
<!-- WFS globe -->
<circle cx="81" cy="423.600" r="11.700" fill="#e6eef9" stroke="#5f8fdb" stroke-width="1"/><path d="M69.500 423.600h23M71 417.600h20M71 429.600h20" stroke="#7fa8e6" stroke-width=".8"/><ellipse cx="81" cy="423.600" rx="5.300" ry="11.700" fill="none" stroke="#7fa8e6" stroke-width=".8"/>
<path d="M74.5 418.6L78.7 429.7L83.4 418.3L87.7 418.6" fill="none" stroke="#1c1c24" stroke-width="1.2" stroke-linejoin="round"/><circle cx="74.5" cy="418.6" r="1.5" fill="#fff" stroke="#1c1c24" stroke-width="1"/><circle cx="78.7" cy="429.7" r="1.5" fill="#fff" stroke="#1c1c24" stroke-width="1"/><circle cx="83.4" cy="418.3" r="1.5" fill="#fff" stroke="#1c1c24" stroke-width="1"/><circle cx="87.7" cy="418.6" r="1.5" fill="#fff" stroke="#1c1c24" stroke-width="1"/><use href="#plus" x="83.8" y="428.3"/>
<!-- delimited text -->
<path d="M77.600 453.100C81.500 453 84 455.500 84 459C84 463.500 80.500 467.500 75.200 470.200L74.200 468.500C77.800 466.300 80 464 80.300 461.800C77 463.200 73.300 461.500 73.100 458C73 455.300 75 453.300 77.600 453.100Z" fill="#6b98c8" stroke="#2a456c" stroke-width="1" stroke-linejoin="round"/>
<use href="#plus" x="83.8" y="465.7"/>
<!-- new shapefile -->
<path d="M71.5 491.5L77.8 506.4L84.5 491.5L90.9 491.7" fill="none" stroke="#3d5a78" stroke-width="1.3" stroke-linejoin="round"/><circle cx="71.5" cy="491.5" r="2.2" fill="#f4f4f4" stroke="#3d5a78" stroke-width="1.1"/><circle cx="77.8" cy="506.4" r="2.2" fill="#f4f4f4" stroke="#3d5a78" stroke-width="1.1"/><circle cx="84.5" cy="491.5" r="2.2" fill="#f4f4f4" stroke="#3d5a78" stroke-width="1.1"/><circle cx="90.9" cy="491.7" r="2.2" fill="#f4f4f4" stroke="#3d5a78" stroke-width="1.1"/>
<use href="#star" x="83.500" y="503.500"/>
<path d="M95.200 503.400h6.800l-3.400 6.900z" fill="#5a5a5a"/>
<!-- remove layer -->
<rect x="70.300" y="529.200" width="19.400" height="19.400" fill="#efefec" stroke="#6b6b6b" stroke-width="1"/>
<rect x="84" y="542.100" width="9" height="8.800" rx="1.900" fill="#e94f5e" stroke="#d43848" stroke-width=".5"/><path d="M85.600 546.500h5.800" stroke="#fff" stroke-width="2"/>
<use href="#hdlh" x="65" y="564.100"/>
<!-- ===== layers panel ===== -->
<circle cx="114.900" cy="141.800" r="6.800" fill="#3a3a3a"/><path d="M112 138.900l5.800 5.800M117.800 138.900l-5.800 5.800" stroke="#fff" stroke-width="2.100"/>
<circle cx="135" cy="141.800" r="6.800" fill="#3a3a3a"/><rect x="133.600" y="138.800" width="4.800" height="3.800" rx=".8" fill="none" stroke="#fff" stroke-width="1.200"/><rect x="131.400" y="141.200" width="4.800" height="3.800" rx=".8" fill="#3a3a3a" stroke="#fff" stroke-width="1.200"/>
<path d="M111.800 164.200h9.400l-4.700 7.200z" fill="#8c8c8c"/>
<rect x="133.800" y="160.400" width="12.600" height="12.900" rx="2" fill="#d7dfe8" stroke="#2f3b4c" stroke-width="1"/><path d="M136.300 164.200l3.900 5.300l6.900-11.400" fill="none" stroke="#12203a" stroke-width="2.300"/>
<path d="M160.800 163l4.500 9.600l4.400-9.600" fill="none" stroke="#c6cedb" stroke-width=".8"/><circle cx="165.300" cy="172.700" r=".9" fill="#e4e4e4"/>
<path d="M151 186.700h16" stroke="#f0609f" stroke-width="1"/>

<!-- ===== status bar icons ===== -->
<rect x="1200.500" y="1184.600" width="19" height="19" fill="#f4f4f4" stroke="#8f8f8f" stroke-width="1"/>
<g fill="none" stroke="#111" stroke-linecap="round"><ellipse cx="1206.700" cy="1190.700" rx="3.100" ry="4.600" transform="rotate(-38 1206.700 1190.700)" stroke-width="1.350"/><path d="M1205.300 1188.200l3.600 5.400" stroke-width="1.050"/><circle cx="1211.100" cy="1197.700" r="4.200" stroke-width="1.350" fill="#fff"/><path d="M1203.800 1193.500q.8 5.500 4.200 7.200M1209.800 1188q4.500 3 5.300 7.500" stroke-width="1.050"/></g><circle cx="1211.200" cy="1197.900" r="1.300" fill="#111"/><g fill="#222"><circle cx="1216.400" cy="1187.400" r=".8"/><circle cx="1214.500" cy="1189" r=".8"/><circle cx="1212.400" cy="1189.500" r=".8"/><circle cx="1202.700" cy="1196.500" r=".8"/></g>
<rect x="1761.500" y="1184.500" width="19" height="19" fill="#efefef" stroke="#9a9a9a" stroke-width="1"/>
<path d="M1764 1201q9-2.500 14.500-14.500q-2.500 12-9 15.500q-3 .8-5.500-1z" fill="#7a7a7a" stroke="#666" stroke-width=".6"/><circle cx="1768.300" cy="1190.700" r="4.100" fill="none" stroke="#d42030" stroke-width="1.500"/><path d="M1765.500 1188l5.600 5.400" stroke="#d42030" stroke-width="1.400"/>
<rect x="1787.300" y="1187.300" width="13" height="13" rx="2" fill="#dde4ee" stroke="#4a5668" stroke-width="1.100"/><path d="M1789.800 1193.300l3.800 4.800l7.300-12.300" fill="none" stroke="#12203a" stroke-width="2.500" stroke-linejoin="miter"/>
<rect x="1931.500" y="1184.500" width="19" height="19" fill="#e4e4e4" stroke="#9a9a9a" stroke-width="1"/>
<circle cx="1941" cy="1194" r="6.500" fill="#c9c9c9" stroke="#777" stroke-width="1"/><ellipse cx="1941" cy="1194" rx="3" ry="6.500" fill="none" stroke="#777" stroke-width=".9"/><path d="M1934.500 1194h13M1936 1190h10M1936 1198h10" stroke="#777" stroke-width=".9"/>
<path d="M1967 1207.800l9-9M1971 1207.800l5-5" stroke="#6a6a6a" stroke-width="1"/>
<path d="M1746.500 1193.500l-2.800-.0l2.800 4l2.800-4z" fill="#444"/>




</svg>

<!-- red annotation boxes -->
<div class="r" style="left:54px;top:33px;width:1924px;height:4px"></div>
<div class="r" style="left:54px;top:33px;width:4px;height:1177.8px"></div>
<div class="r" style="left:1974px;top:33px;width:4px;height:1143px"></div>
<div class="r" style="left:1976px;top:1172px;width:2.5px;height:1238px;height:37.8px"></div>
<div class="r" style="left:54px;top:128.3px;width:1924px;height:4px"></div>
<div class="r" style="left:102px;top:128.3px;width:4px;height:1082.5px"></div>
<div class="r" style="left:102px;top:160px;width:300px;height:4px"></div>
<div class="r" style="left:397.5px;top:128.3px;width:4px;height:1048px"></div>
<div class="r" style="left:102px;top:1172px;width:1876px;height:4px"></div>
<div class="r" style="left:54px;top:1207px;width:52px;height:3.8px"></div>
<div class="r" style="left:106px;top:1207.8px;width:1872.5px;height:2.1px"></div>

<div class="circ" style="left:1008px;top:58px">2</div>
<div class="circ" style="left:217.5px;top:596px">1</div>
<div class="circ" style="left:1011px;top:596.5px">3</div>
<div class="circ" style="left:1012.5px;top:1162.5px">4</div>
<div class="circ" style="left:51px;top:598px">5</div>
</body>
</html>
